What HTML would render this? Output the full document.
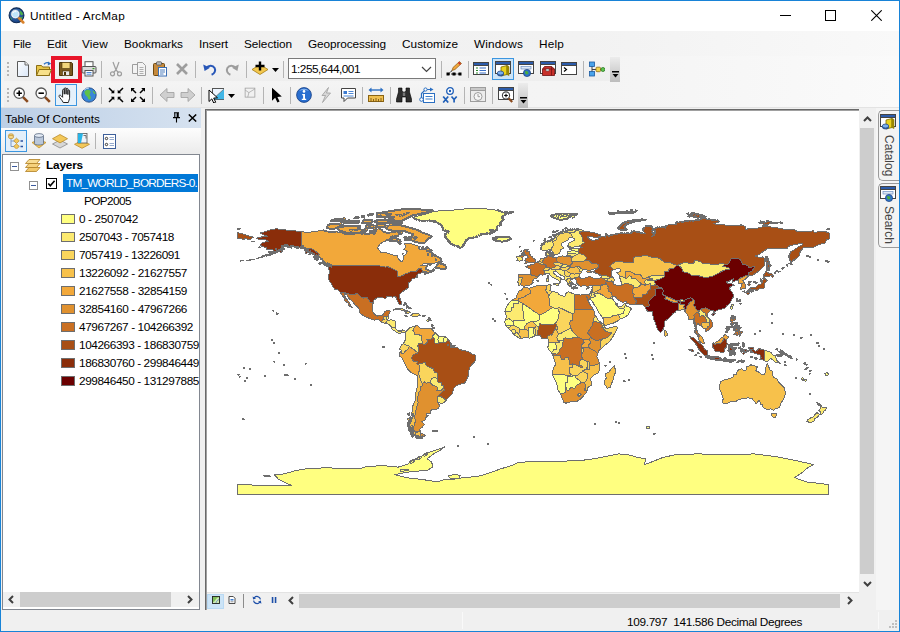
<!DOCTYPE html>
<html><head><meta charset="utf-8"><title>Untitled - ArcMap</title>
<style>
*{box-sizing:border-box;margin:0;padding:0}
html,body{width:900px;height:632px;overflow:hidden;background:#fff}
body{font-family:"Liberation Sans",sans-serif;font-size:12px;color:#000;position:relative}
.a{position:absolute}
.t{position:absolute;white-space:nowrap;line-height:14px;height:14px;transform-origin:0 50%;display:inline-block}
#win{position:absolute;left:0;top:0;width:900px;height:632px;background:#f0f0f0;overflow:hidden}
#frame{position:absolute;left:0;top:0;width:900px;height:632px;border:1px solid #1883d7;pointer-events:none}
.sep{position:absolute;width:1px;height:17px;background:#b4b4b4}
.grip{position:absolute;width:2px;height:16px;background:repeating-linear-gradient(180deg,#b5b5b5 0 2px,transparent 2px 4px)}
.opt{position:absolute;width:10px;background:linear-gradient(180deg,#ececec,#bdbdbd)}
.ic{position:absolute;width:16px;height:16px;overflow:visible}
.sw{position:absolute;left:61px;width:14px;height:10px;border:1px solid #6e6e6e}
.lg{position:absolute;left:79px}
</style></head><body>
<div id="win">
<!-- title bar -->
<div class="a" style="left:1px;top:1px;width:898px;height:30px;background:#fff"></div>
<span class="t" style="left:30px;top:9px;font-size:11.8px;letter-spacing:0.266px">Untitled - ArcMap</span>
<!-- menu bar -->
<div class="a" style="left:1px;top:31px;width:898px;height:25px;background:linear-gradient(90deg,#f0f0f0 0,#f2f2f2 65%,#f9f9f9 100%)"></div>
<!-- toolbar area -->
<div class="a" style="left:1px;top:56px;width:898px;height:52px;background:linear-gradient(90deg,#f3f3f3 0,#f4f4f4 65%,#fafafa 100%)"></div>
<div class="a" style="left:4px;top:57px;width:608px;height:24px;background:linear-gradient(180deg,#f4f4f4,#eeeeee)"></div>
<div class="a" style="left:4px;top:83px;width:516px;height:24px;background:linear-gradient(180deg,#f4f4f4,#eeeeee)"></div>
<div class="a" style="left:1px;top:107px;width:898px;height:1px;background:#e3e3e3"></div>
<span class="t" style="left:13px;top:37px;font-size:11.8px;letter-spacing:-0.254px">File</span><span class="t" style="left:47px;top:37px;font-size:11.8px;letter-spacing:-0.082px">Edit</span><span class="t" style="left:82px;top:37px;font-size:11.8px;letter-spacing:0.160px">View</span><span class="t" style="left:124px;top:37px;font-size:11.8px;letter-spacing:-0.002px">Bookmarks</span><span class="t" style="left:199px;top:37px;font-size:11.8px;letter-spacing:-0.086px">Insert</span><span class="t" style="left:244px;top:37px;font-size:11.8px;letter-spacing:-0.059px">Selection</span><span class="t" style="left:308px;top:37px;font-size:11.8px;letter-spacing:-0.105px">Geoprocessing</span><span class="t" style="left:402px;top:37px;font-size:11.8px;letter-spacing:0.030px">Customize</span><span class="t" style="left:474px;top:37px;font-size:11.8px;letter-spacing:0.163px">Windows</span><span class="t" style="left:539px;top:37px;font-size:11.8px;letter-spacing:0.184px">Help</span>
<div class="grip" style="left:7px;top:62px"></div><div class="a" style="left:51px;top:56px;width:31px;height:27px;border:4px solid #e8152a"></div><svg class="a" style="left:15px;top:61px" width="16" height="16" viewBox="0 0 16 16"><defs><linearGradient id="gnew" x1="0" y1="0" x2="1" y2="1"><stop offset="0" stop-color="#fff"/><stop offset="1" stop-color="#d9e6f8"/></linearGradient></defs><path d="M2.5 0.5h7.5l3.5 3.5v11.5h-11z" fill="url(#gnew)" stroke="#5a5a5a"/><path d="M10 0.5v3.5h3.5" fill="#e8e8e8" stroke="#6b6b6b"/></svg><svg class="a" style="left:36px;top:61px" width="16" height="16" viewBox="0 0 16 16"><path d="M0.5 4.5h5l1.2 1.5h6.8v8.5h-13z" fill="#e8c64a" stroke="#8a6d14"/><path d="M0.5 14.5l2.6-6h12.4l-2.6 6z" fill="#f7e08a" stroke="#8a6d14"/><path d="M8 3.2c2-2 4.5-2 5.7-.3" fill="none" stroke="#2b6fc2" stroke-width="1.4"/><path d="M12 0.6l3.2 2.2l-3.4 1.6z" fill="#2b6fc2"/></svg><svg class="a" style="left:58px;top:61px" width="16" height="16" viewBox="0 0 16 16"><path d="M1.5 1.5h12l1 1v12h-13z" fill="#7a5a1e" stroke="#4a3508"/><rect x="4" y="1.5" width="8" height="6" fill="#f1d57a" stroke="#4a3508" stroke-width=".6"/><rect x="4.5" y="10" width="7" height="4.5" fill="#e9e9e9" stroke="#4a3508" stroke-width=".6"/><rect x="6" y="11" width="2" height="3" fill="#4a3508"/></svg><svg class="a" style="left:81px;top:61px" width="16" height="16" viewBox="0 0 16 16"><rect x="4" y="0.7" width="8" height="5" fill="#fff" stroke="#555"/><rect x="1" y="5.5" width="14" height="6.5" rx="1" fill="#d9d9d9" stroke="#555"/><rect x="4" y="9.5" width="8" height="5.5" fill="#fff" stroke="#555"/><rect x="11.5" y="7" width="2" height="1.2" fill="#3a9a2a"/><path d="M5.5 11.5h5M5.5 13.2h5" stroke="#3b7bd1" stroke-width=".9"/></svg><div class="sep" style="left:101px;top:61px"></div><svg class="a" style="left:108px;top:61px" width="16" height="16" viewBox="0 0 16 16"><path d="M5 1l3 8M11 1l-3 8M8 9l-2.5 2.5M8 9l2.5 2.5" stroke="#9d9d9d" stroke-width="1.2" fill="none"/><circle cx="4.5" cy="12.8" r="2" fill="none" stroke="#9d9d9d" stroke-width="1.2"/><circle cx="11.5" cy="12.8" r="2" fill="none" stroke="#9d9d9d" stroke-width="1.2"/></svg><svg class="a" style="left:131px;top:61px" width="16" height="16" viewBox="0 0 16 16"><path d="M1.5 3.5h6l2 2v7h-8z" fill="#f3f3f3" stroke="#9d9d9d"/><path d="M6.5 1.5h5l3 3v10h-8z" fill="#f3f3f3" stroke="#9d9d9d"/><path d="M8.5 6.5h4M8.5 8.5h4M8.5 10.5h4M8.5 12.5h4" stroke="#9d9d9d" stroke-width=".8"/></svg><svg class="a" style="left:152px;top:61px" width="16" height="16" viewBox="0 0 16 16"><rect x="1.5" y="2.5" width="11" height="12" rx="1" fill="#c68a3c" stroke="#6f4a12"/><rect x="4.5" y="0.8" width="5" height="3.2" rx=".8" fill="#bdbdbd" stroke="#555" stroke-width=".8"/><rect x="6.5" y="6.5" width="8" height="8.5" fill="#fff" stroke="#3b6fb5"/><path d="M8 9h5M8 11h5M8 13h3.5" stroke="#3b6fb5" stroke-width=".9"/></svg><svg class="a" style="left:174px;top:61px" width="16" height="16" viewBox="0 0 16 16"><path d="M3 3l10 10M13 3L3 13" stroke="#9d9d9d" stroke-width="2.6" fill="none"/></svg><div class="sep" style="left:195px;top:61px"></div><svg class="a" style="left:202px;top:61px" width="16" height="16" viewBox="0 0 16 16"><path d="M4.2 7.2c2.4-3 6.6-3.2 8.4-.2c1.4 2.6 0 5.6-3 6.8" fill="none" stroke="#2857b8" stroke-width="2"/><path d="M1.2 3.6l1.4 6.4l5.4-3.2z" fill="#2857b8"/></svg><svg class="a" style="left:224px;top:61px" width="16" height="16" viewBox="0 0 16 16"><path d="M11.8 7.2c-2.4-3-6.6-3.2-8.4-.2c-1.4 2.6 0 5.6 3 6.8" fill="none" stroke="#9d9d9d" stroke-width="2"/><path d="M14.8 3.6l-1.4 6.4l-5.4-3.2z" fill="#9d9d9d"/></svg><div class="sep" style="left:246px;top:61px"></div><svg class="a" style="left:252px;top:61px" width="16" height="16" viewBox="0 0 16 16"><path d="M8 3.5l8 5l-8 5l-8-5z" fill="#f4c84e" stroke="#a67c12" stroke-width=".8"/><path d="M8 0.5v9M3.5 5h9" stroke="#000" stroke-width="2.4"/></svg><svg class="a" style="left:272px;top:68px" width="7" height="4"><path d="M0 0h7L3.5 4z" fill="#000"/></svg><div class="sep" style="left:283px;top:61px"></div><div class="a" style="left:288px;top:58px;width:148px;height:21px;background:#fff;border:1px solid #7a7a7a"></div><span class="t" style="left:291px;top:62px;font-size:11.8px;letter-spacing:-0.496px">1:255,644,001</span><svg class="a" style="left:421px;top:66px" width="11" height="7" viewBox="0 0 11 7"><path d="M1 1 L5.5 5.5 L10 1" fill="none" stroke="#444" stroke-width="1.2"/></svg><div class="sep" style="left:441px;top:61px"></div><svg class="a" style="left:446px;top:61px" width="16" height="16" viewBox="0 0 16 16"><path d="M2 13h12M2 13l6-5" stroke="#000" stroke-width="1" stroke-dasharray="2 1.2" fill="none"/><rect x="0.5" y="11.5" width="3" height="3" fill="#000"/><rect x="6.5" y="11.5" width="3" height="3" fill="#000"/><rect x="12.5" y="11.5" width="3" height="3" fill="#000"/><path d="M6 9.5l1-3l6.5-6l2 2l-6.5 6z" fill="#f0a63c" stroke="#8a5a14" stroke-width=".7"/><path d="M12.5 1.4l2 2" stroke="#c9302c" stroke-width="1.6"/></svg><div class="sep" style="left:468px;top:61px"></div><div class="a" style="left:492px;top:58px;width:22px;height:22px;background:#cce4f7;border:1px solid #3c96e0"></div><svg class="a" style="left:473px;top:61px" width="16" height="16" viewBox="0 0 16 16"><rect x="0.5" y="1.5" width="15" height="12" fill="#fff" stroke="#444"/><rect x="0.5" y="1.5" width="15" height="3" fill="#2c5cab" stroke="#444"/><path d="M3 7h2M3 9.5h2M3 12h2" stroke="#2a8a2a" stroke-width="1.2"/><path d="M6.5 7h6.5M6.5 9.5h6.5M6.5 12h6.5" stroke="#3b6fc4" stroke-width="1.2"/></svg><svg class="a" style="left:495px;top:61px" width="16" height="16" viewBox="0 0 16 16"><rect x="0.5" y="0.5" width="15" height="12" fill="#fff" stroke="#444"/><rect x="0.5" y="0.5" width="15" height="3" fill="#2c5cab" stroke="#444"/><path d="M6 6l6-1.5v9l-6 1.5z" fill="#e9d21c" stroke="#7a6a00" stroke-width=".8"/><path d="M12 4.5l2 1v9l-2-1z" fill="#a89500" stroke="#7a6a00" stroke-width=".6"/><ellipse cx="5.5" cy="13" rx="3.2" ry="2" fill="#3f78c9" stroke="#1d3f78" stroke-width=".7"/><ellipse cx="5.5" cy="12" rx="3.2" ry="2" fill="#7ab0ee" stroke="#1d3f78" stroke-width=".7"/></svg><svg class="a" style="left:518px;top:61px" width="16" height="16" viewBox="0 0 16 16"><rect x="0.5" y="0.5" width="15" height="12" fill="#fff" stroke="#444"/><rect x="0.5" y="0.5" width="15" height="3" fill="#2c5cab" stroke="#444"/><rect x="3" y="5.5" width="10" height="2.5" fill="#dfe8f5" stroke="#6d8fc2" stroke-width=".7"/><circle cx="9" cy="12" r="3.6" fill="#2f72c8" stroke="#173e7c" stroke-width=".7"/><path d="M7 10.5c1.5-1 3 0 3.5 1.5c-.5 1.5-2 1.8-3 1z" fill="#4cae3c"/></svg><svg class="a" style="left:540px;top:61px" width="16" height="16" viewBox="0 0 16 16"><rect x="0.5" y="0.5" width="15" height="12" fill="#fff" stroke="#444"/><rect x="0.5" y="0.5" width="15" height="3" fill="#2c5cab" stroke="#444"/><path d="M2.5 8l2-2.5h7l3 2.5v6.5h-12z" fill="#c8302a" stroke="#6e1010" stroke-width=".8"/><path d="M2.5 8h12M11.5 5.5v9" stroke="#6e1010" stroke-width=".7"/><rect x="6" y="8" width="3" height="2" fill="#e6e6e6" stroke="#555" stroke-width=".5"/></svg><svg class="a" style="left:561px;top:61px" width="16" height="16" viewBox="0 0 16 16"><rect x="0.5" y="1.5" width="15" height="12" fill="#fff" stroke="#444"/><rect x="0.5" y="1.5" width="15" height="3" fill="#2c5cab" stroke="#444"/><path d="M3 6.5l2.5 2L3 10.5" fill="none" stroke="#000" stroke-width="1.2"/></svg><div class="sep" style="left:583px;top:61px"></div><svg class="a" style="left:589px;top:61px" width="16" height="16" viewBox="0 0 16 16"><path d="M3 4v9M3 8.5h10" stroke="#444" stroke-width="1" fill="none"/><rect x="0.5" y="1" width="5" height="4.5" fill="#4aa3ea" stroke="#1c5aa0" stroke-width=".8"/><rect x="0.5" y="10.5" width="5" height="4.5" fill="#4aa3ea" stroke="#1c5aa0" stroke-width=".8"/><rect x="7" y="6.2" width="4.5" height="4.5" rx="1" fill="#f3d34a" stroke="#8a6d14" stroke-width=".8"/><rect x="12" y="6.5" width="3.8" height="4" rx="1.8" fill="#5ec44e" stroke="#2a7a22" stroke-width=".8"/></svg><div class="opt" style="left:610px;top:57px;height:25px"></div><svg class="a" style="left:612px;top:71px" width="7" height="7"><rect x="0" y="0" width="7" height="1.5" fill="#000"/><path d="M0.5 3h6L3.5 6.5z" fill="#000"/></svg><div class="grip" style="left:7px;top:88px"></div><div class="a" style="left:55px;top:84px;width:22px;height:22px;background:#e5f1fb;border:1px solid #3c96e0"></div><svg class="a" style="left:13px;top:87px" width="16" height="16" viewBox="0 0 16 16"><path d="M9.8 9.8l5 5" stroke="#8a4a1e" stroke-width="2.6"/><circle cx="6.2" cy="6.2" r="5.2" fill="#fff" stroke="#555" stroke-width="1.3"/><path d="M3.5 6.2h5.4M6.2 3.5v5.4" stroke="#000" stroke-width="1.6"/></svg><svg class="a" style="left:35px;top:87px" width="16" height="16" viewBox="0 0 16 16"><path d="M9.8 9.8l5 5" stroke="#8a4a1e" stroke-width="2.6"/><circle cx="6.2" cy="6.2" r="5.2" fill="#fff" stroke="#555" stroke-width="1.3"/><path d="M3.5 6.2h5.4" stroke="#000" stroke-width="1.6"/></svg><svg class="a" style="left:58px;top:87px" width="16" height="16" viewBox="0 0 16 16"><path d="M5.2 15.5c-.8-2.2-3.6-4.6-4.2-6.2c-.3-1.2 1.2-1.6 2.2-.5l1.4 1.5V3.2c0-1.3 1.7-1.3 1.7 0v4V1.8c0-1.3 1.8-1.3 1.8 0v5.4V2.2c0-1.3 1.8-1.3 1.8 0v5.4V3.8c0-1.2 1.7-1.2 1.7 0v6.4c0 2.4-.9 3.4-1.3 5.3z" fill="#fff" stroke="#222" stroke-width="1" stroke-linejoin="round"/></svg><svg class="a" style="left:81px;top:87px" width="16" height="16" viewBox="0 0 16 16"><circle cx="8" cy="8" r="7.2" fill="#3a86d8" stroke="#1a3f7a" stroke-width=".8"/><path d="M3.5 4.5c2-2.2 4.5-2 6 -.5c.6 1.6-1 2.6-.8 4.2c1.2 1.2 1.8 2.5.5 4.3c-1.6.6-2.4-1.2-2.8-2.8c-1.6-.6-3-2.6-2.9-5.2z" fill="#5fc04a"/><path d="M11.5 3.5c1.4.4 2.6 1.7 3 3.2c-1.2.6-2.4-.2-3-3.2z" fill="#5fc04a"/><path d="M3 3.2a7 7 0 0 1 5-2.2" stroke="#cfe6ff" stroke-width="1" fill="none"/></svg><div class="sep" style="left:101px;top:87px"></div><svg class="a" style="left:108px;top:87px" width="16" height="16" viewBox="0 0 16 16"><path d="M1 1l4.5 4.5M15 1l-4.5 4.5M1 15l4.5-4.5M15 15l-4.5-4.5" stroke="#000" stroke-width="1.5" fill="none"/><path d="M6.3 2.8v3.5h-3.5zM9.7 2.8v3.5h3.5zM6.3 13.2v-3.5h-3.5zM9.7 13.2v-3.5h3.5z" fill="#000"/></svg><svg class="a" style="left:130px;top:87px" width="16" height="16" viewBox="0 0 16 16"><path d="M2 2l4 4M14 2l-4 4M2 14l4-4M14 14l-4-4" stroke="#000" stroke-width="1.5" fill="none"/><path d="M1 4.8v-3.8h3.8zM15 4.8v-3.8h-3.8zM1 11.2v3.8h3.8zM15 11.2v3.8h-3.8z" fill="#000"/></svg><div class="sep" style="left:152px;top:87px"></div><svg class="a" style="left:159px;top:87px" width="16" height="16" viewBox="0 0 16 16"><path d="M1 8l7-6.5v4h7v5h-7v4z" fill="#cfcfcf" stroke="#9d9d9d" stroke-width=".8"/></svg><svg class="a" style="left:180px;top:87px" width="16" height="16" viewBox="0 0 16 16"><path d="M15 8l-7-6.5v4h-7v5h7v4z" fill="#cfcfcf" stroke="#9d9d9d" stroke-width=".8"/></svg><div class="sep" style="left:201px;top:87px"></div><svg class="a" style="left:208px;top:87px" width="16" height="16" viewBox="0 0 16 16"><rect x="4.5" y="1.5" width="12" height="11" fill="#eef6ff" stroke="#555"/><path d="M4.5 12.5l12-11v11z" fill="#41b6e6" stroke="#555" stroke-width=".6"/><path d="M1 3l0 11.5l2.8-2.6l2 4.2l1.9-.9l-2-4.1l3.8-.3z" fill="#fff" stroke="#000" stroke-width="1"/></svg><svg class="a" style="left:228px;top:94px" width="7" height="4"><path d="M0 0h7L3.5 4z" fill="#000"/></svg><svg class="a" style="left:244px;top:87px" width="12" height="12" viewBox="0 0 16 16"><rect x="1.5" y="1.5" width="13" height="12" fill="#f1f1f1" stroke="#9d9d9d"/><path d="M1.5 4l5 3.5l-1.5 6M6.5 7.5l8-5" fill="none" stroke="#9d9d9d" stroke-width=".9"/></svg><div class="sep" style="left:263px;top:87px"></div><svg class="a" style="left:269px;top:87px" width="16" height="16" viewBox="0 0 16 16"><path d="M3 0.8v13l3.2-3l2.2 4.6l2.2-1l-2.2-4.5l4.4-.4z" fill="#000"/></svg><div class="sep" style="left:290px;top:87px"></div><svg class="a" style="left:296px;top:87px" width="16" height="16" viewBox="0 0 16 16"><circle cx="8" cy="8" r="7.4" fill="#2a6fd0" stroke="#143c82" stroke-width=".8"/><path d="M3 4a6.5 6.5 0 0 1 10 0a9 6 0 0 0-10 0z" fill="#9cc4f5" opacity=".8"/><circle cx="8" cy="4.4" r="1.3" fill="#fff"/><path d="M6.2 7h2.8v4.8h1.2v1.2h-4.4v-1.2h1.3v-3.6h-.9z" fill="#fff"/></svg><svg class="a" style="left:318px;top:87px" width="16" height="16" viewBox="0 0 16 16"><path d="M10.5 0.5l-6.5 8h3.5l-3 7l8-9.5h-4z" fill="#d8d8d8" stroke="#9d9d9d" stroke-width=".8"/></svg><svg class="a" style="left:340px;top:87px" width="16" height="16" viewBox="0 0 16 16"><path d="M1.5 1.5h14v9.5h-8l-3.5 3.5v-3.5h-2.5z" fill="#fff" stroke="#444"/><rect x="3.5" y="4" width="3.5" height="3" fill="#3b7bd1"/><path d="M8.5 4.5h5M8.5 6.5h5M3.5 9h10" stroke="#3b7bd1" stroke-width=".9"/></svg><div class="sep" style="left:362px;top:87px"></div><svg class="a" style="left:368px;top:87px" width="16" height="16" viewBox="0 0 16 16"><path d="M2 3h12" stroke="#2b6fc2" stroke-width="1.4"/><path d="M0.5 3l3-2.4v4.8zM15.5 3l-3-2.4v4.8z" fill="#2b6fc2"/><rect x="0.5" y="8.5" width="15" height="6" fill="#f0c050" stroke="#8a6414"/><path d="M3 11v3.5M5.5 12v2.5M8 11v3.5M10.5 12v2.5M13 11v3.5" stroke="#6b4a0c" stroke-width=".8"/></svg><div class="sep" style="left:390px;top:87px"></div><svg class="a" style="left:396px;top:87px" width="16" height="16" viewBox="0 0 16 16"><path d="M2.5 1h3.5v3l1 1h2l1-1v-3h3.5v4l2 7v3h-5.5v-5h-4v5h-5.5v-3l2-7z" fill="#2e2e2e" stroke="#000" stroke-width=".6"/><rect x="6.8" y="5.5" width="2.4" height="3.5" fill="#777"/></svg><svg class="a" style="left:419px;top:87px" width="16" height="16" viewBox="0 0 16 16"><rect x="4.5" y="6.5" width="11" height="9" fill="#fff" stroke="#2b6fc2"/><path d="M6.5 9.5h7M6.5 12h7" stroke="#2b6fc2" stroke-width=".9"/><path d="M2.5 12V6.5l4-4h5.5" fill="none" stroke="#2b6fc2" stroke-width="1.2"/><circle cx="2.5" cy="12.5" r="1.8" fill="#fff" stroke="#2b6fc2"/><circle cx="6.5" cy="2.5" r="1.6" fill="#fff" stroke="#2b6fc2"/><path d="M11 0.5l3.5 2l-3.5 2z" fill="#2b6fc2"/></svg><svg class="a" style="left:442px;top:87px" width="16" height="16" viewBox="0 0 16 16"><circle cx="8" cy="4" r="3.3" fill="#fff" stroke="#1f5fb8" stroke-width="1.3"/><circle cx="8" cy="4" r="1.2" fill="#1f5fb8"/><path d="M1.2 9.5l5 6M6.2 9.5l-5 6" stroke="#1f5fb8" stroke-width="1.7"/><path d="M9.5 9.5l2.6 3l2.6-3M12.1 12.5v3" stroke="#1f5fb8" stroke-width="1.7" fill="none"/></svg><div class="sep" style="left:464px;top:87px"></div><svg class="a" style="left:470px;top:87px" width="16" height="16" viewBox="0 0 16 16"><rect x="0.5" y="0.5" width="15" height="14" fill="#ececec" stroke="#9d9d9d"/><rect x="0.5" y="0.5" width="15" height="3" fill="#c8c8c8" stroke="#9d9d9d"/><circle cx="8" cy="9.5" r="4" fill="#f6f6f6" stroke="#9d9d9d"/><path d="M8 7v2.7h2" stroke="#9d9d9d" fill="none"/></svg><div class="sep" style="left:492px;top:87px"></div><svg class="a" style="left:498px;top:87px" width="16" height="16" viewBox="0 0 16 16"><rect x="0.5" y="0.5" width="15" height="12" fill="#fff" stroke="#444"/><rect x="0.5" y="0.5" width="15" height="3" fill="#2c5cab" stroke="#444"/><circle cx="8" cy="8.5" r="3.6" fill="#fff" stroke="#444" stroke-width="1.1"/><path d="M6.2 8.5h3.6M8 6.7v3.6" stroke="#000" stroke-width="1.1"/><path d="M10.6 11.2l3.6 3.8" stroke="#8a4a1e" stroke-width="2.2"/></svg><div class="opt" style="left:518px;top:83px;height:25px"></div><svg class="a" style="left:520px;top:97px" width="7" height="7"><rect x="0" y="0" width="7" height="1.5" fill="#000"/><path d="M0.5 3h6L3.5 6.5z" fill="#000"/></svg>
<!-- TOC -->
<div class="a" style="left:1px;top:108px;width:200px;height:20px;background:linear-gradient(90deg,#bccfe6 0,#d6e2f0 100%)"></div>
<span class="t" style="left:5px;top:112px;font-size:11.8px;letter-spacing:0.033px">Table Of Contents</span>
<div class="a" style="left:1px;top:128px;width:200px;height:26px;background:linear-gradient(180deg,#fdfdfd,#ebebeb)"></div>
<div class="a" style="left:2px;top:154px;width:198px;height:456px;background:#fff;border:1px solid #828790"></div>
<svg class="a" style="left:172px;top:112px" width="9" height="11" viewBox="0 0 9 11"><path d="M2 0.8h5M2.8 0.8v4.7M6.2 0.8v4.7M5.2 0.8v4.7M1 5.6h7M4.5 5.6v5" fill="none" stroke="#000" stroke-width="1.1"/></svg><svg class="a" style="left:188px;top:114px" width="9" height="8" viewBox="0 0 9 8"><path d="M0.8 0.5L8.2 7.5M8.2 0.5L0.8 7.5" fill="none" stroke="#000" stroke-width="1.5"/></svg><div class="a" style="left:5px;top:130px;width:22px;height:22px;background:#e3effa;border:1px solid #3c96e0"></div><svg class="a" style="left:7px;top:133px" width="16" height="16" viewBox="0 0 16 16"><path d="M4 4.5v9h3.5M4 8h3.5" fill="none" stroke="#7a9ac8" stroke-width="1"/><ellipse cx="4" cy="2.5" rx="2.6" ry="1.7" fill="#f6d98a" stroke="#b98a2a" stroke-width=".7"/><ellipse cx="4" cy="4" rx="2.6" ry="1.7" fill="#f6d98a" stroke="#b98a2a" stroke-width=".7"/><path d="M9.5 5.2l2.8 2.6l-2.8 2.6l-2.8-2.6z" fill="#f3c85a" stroke="#b98a2a" stroke-width=".7"/><path d="M9.5 10.8l2.8 2.6l-2.8 2.6l-2.8-2.6z" fill="#f3c85a" stroke="#b98a2a" stroke-width=".7"/><path d="M13.5 8h2.5M13.5 13.5h2.5" stroke="#2b50a0" stroke-width="1.5"/></svg><svg class="a" style="left:31px;top:133px" width="16" height="16" viewBox="0 0 16 16"><path d="M1 9.5l7 5.5l7-5.5l-7-3z" fill="#f3c85a" stroke="#b98a2a" stroke-width=".7"/><path d="M3.5 2.5v8c0 2 9 2 9 0v-8" fill="#b9c7da" stroke="#5a6a82" stroke-width=".8"/><ellipse cx="8" cy="2.5" rx="4.5" ry="1.9" fill="#e4ebf5" stroke="#5a6a82" stroke-width=".8"/></svg><svg class="a" style="left:52px;top:133px" width="16" height="16" viewBox="0 0 16 16"><path d="M8 7l7.5 4l-7.5 4l-7.5-4z" fill="#d7d7d7" stroke="#8a8a8a" stroke-width=".8"/><path d="M8 1.5l7.5 4.2l-7.5 4.2l-7.5-4.2z" fill="#f3c85a" stroke="#b98a2a" stroke-width=".8"/></svg><svg class="a" style="left:74px;top:133px" width="16" height="16" viewBox="0 0 16 16"><path d="M8 7.5l7.5 3.8l-7.5 4l-7.5-4z" fill="#f3c85a" stroke="#b98a2a" stroke-width=".8"/><rect x="4" y="0.5" width="9" height="9.5" fill="#eef3f8" stroke="#555" stroke-width=".8"/><path d="M4 0.5h5l-2 9.5h-3z" fill="#27b5e8"/><path d="M9.5 2.5h2.5v3" fill="none" stroke="#555" stroke-width=".8"/></svg><div class="sep" style="left:95px;top:133px;height:16px"></div><svg class="a" style="left:103px;top:134px" width="16" height="16" viewBox="0 0 16 16"><rect x="0.5" y="0.5" width="12" height="14" fill="#fff" stroke="#3d5f9a"/><circle cx="3.5" cy="4.5" r="1.2" fill="none" stroke="#222" stroke-width=".9"/><circle cx="3.5" cy="10.5" r="1.2" fill="none" stroke="#222" stroke-width=".9"/><path d="M6.5 3.5h4.5M6.5 5.5h4.5M6.5 9.5h4.5M6.5 11.5h4.5" stroke="#8aa2c8" stroke-width=".9"/></svg><div class="a" style="left:0;top:155px;width:199px;height:436px;overflow:hidden"><div class="a" style="left:0;top:-155px;width:300px;height:632px"><svg class="a" style="left:10px;top:162px" width="9" height="9"><rect x="0.5" y="0.5" width="8" height="8" fill="#fff" stroke="#919191"/><rect x="2" y="4" width="5" height="1" fill="#3b5a9e"/></svg><svg class="a" style="left:25px;top:157px" width="16" height="16" viewBox="0 0 16 16"><path d="M4 10.5h11l-3.5 4h-11z" fill="#f3c96a" stroke="#b07f22" stroke-width=".8"/><path d="M4 6.5h11l-3.5 4h-11z" fill="#f6d27c" stroke="#b07f22" stroke-width=".8"/><path d="M4 2.5h11l-3.5 4h-11z" fill="#f8dc92" stroke="#b07f22" stroke-width=".8"/></svg><span class="t" style="left:46px;top:158px;font-size:11.8px;letter-spacing:-0.174px"><b>Layers</b></span><svg class="a" style="left:29px;top:181px" width="9" height="9"><rect x="0.5" y="0.5" width="8" height="8" fill="#fff" stroke="#919191"/><rect x="2" y="4" width="5" height="1" fill="#3b5a9e"/></svg><svg class="a" style="left:46px;top:178px" width="11" height="11"><rect x="0.5" y="0.5" width="10" height="10" fill="#fff" stroke="#000"/><path d="M2.3 5.4l2 2.3l4.3-4.9" fill="none" stroke="#000" stroke-width="1.6"/></svg><div class="a" style="left:63px;top:174px;width:135px;height:18px;background:#0078d7"></div><span class="t" style="left:66px;top:176px;font-size:11.8px;color:#fff;letter-spacing:-0.799px">TM_WORLD_BORDERS-0.</span><span class="t" style="left:84px;top:194px;font-size:11.8px;letter-spacing:-0.596px">POP2005</span><div class="sw" style="top:214px;background:#ffff80"></div><span class="t" style="left:79px;top:212px;font-size:11.8px;letter-spacing:-0.362px">0 - 2507042</span><div class="sw" style="top:232px;background:#fcea70"></div><span class="t" style="left:79px;top:230px;font-size:11.8px;letter-spacing:-0.432px">2507043 - 7057418</span><div class="sw" style="top:250px;background:#fad55c"></div><span class="t" style="left:79px;top:248px;font-size:11.8px;letter-spacing:-0.439px">7057419 - 13226091</span><div class="sw" style="top:268px;background:#f7c14b"></div><span class="t" style="left:79px;top:266px;font-size:11.8px;letter-spacing:-0.393px">13226092 - 21627557</span><div class="sw" style="top:286px;background:#f2a83a"></div><span class="t" style="left:79px;top:284px;font-size:11.8px;letter-spacing:-0.393px">21627558 - 32854159</span><div class="sw" style="top:304px;background:#e0912f"></div><span class="t" style="left:79px;top:302px;font-size:11.8px;letter-spacing:-0.393px">32854160 - 47967266</span><div class="sw" style="top:322px;background:#c96f22"></div><span class="t" style="left:79px;top:320px;font-size:11.8px;letter-spacing:-0.402px">47967267 - 104266392</span><div class="sw" style="top:340px;background:#a84f15"></div><span class="t" style="left:79px;top:338px;font-size:11.8px;letter-spacing:-0.409px">104266393 - 186830759</span><div class="sw" style="top:358px;background:#8a2d0a"></div><span class="t" style="left:79px;top:356px;font-size:11.8px;letter-spacing:-0.409px">186830760 - 299846449</span><div class="sw" style="top:376px;background:#6b0000"></div><span class="t" style="left:79px;top:374px;font-size:11.8px;letter-spacing:-0.409px">299846450 - 131297885</span></div></div>
<!-- TOC hscroll -->
<div class="a" style="left:3px;top:592px;width:196px;height:15px;background:#f0f0f0"></div>
<div class="a" style="left:20px;top:592px;width:151px;height:15px;background:#cdcdcd"></div>
<svg class="a" style="left:7px;top:594px" width="8" height="11" viewBox="0 0 8 11"><path d="M6 2 L2.5 5.5 L6 9" fill="none" stroke="#404040" stroke-width="2"/></svg>
<svg class="a" style="left:186px;top:594px" width="8" height="11" viewBox="0 0 8 11"><path d="M2 2 L5.5 5.5 L2 9" fill="none" stroke="#404040" stroke-width="2"/></svg>
<!-- splitter/map frame -->
<div class="a" style="left:205px;top:109px;width:671px;height:501px;background:#f0f0f0"></div>
<div class="a" style="left:205px;top:109px;width:654px;height:501px;background:#696969"></div>
<div class="a" style="left:206px;top:110px;width:653px;height:500px;background:#a0a0a0"></div>
<div class="a" id="map" style="left:207px;top:111px;width:652px;height:481px;background:#fff;overflow:hidden">
<svg class="a" style="left:0;top:0" width="652" height="481" viewBox="207 111 652 481" shape-rendering="crispEdges"><g stroke="#6e6e6e" stroke-linejoin="round"><path stroke-width="2" fill="#ffff80" d="M492.7,238.3L496.8,236.8L503.4,237.0L509.2,237.0L510.8,239.1L508.3,240.3L502.6,241.7L496.0,240.9L493.5,239.4L496.8,238.6ZM551.1,215.3L556.0,214.4L565.9,214.0L577.4,214.3L569.2,216.9L567.5,218.6L561.0,220.0L556.0,218.6L551.1,216.6Z"/><path stroke-width="2" fill="#fcea70" d="M546.3,255.6L546.5,252.3L550.3,251.1L550.8,253.4L549.4,255.1L548.6,255.7ZM777.2,355.2L780.5,355.0L783.0,352.9L783.4,354.1L781.3,355.9L778.0,356.2ZM781.0,350.4L784.3,352.6L784.6,353.7L783.0,351.8Z"/><path stroke-width="2" fill="#fad55c" d="M571.6,287.5L576.2,288.0L573.3,288.6Z"/><path stroke-width="2" fill="#f2a83a" d="M322.0,262.5L326.6,263.3L329.9,266.2L327.4,265.9L323.3,263.8ZM314.3,257.0L316.4,257.2L317.2,260.0L315.1,258.8ZM435.5,267.6L437.6,264.6L439.6,261.8L441.7,261.1L441.2,263.8L445.0,264.9L446.2,267.9L444.2,269.2L440.9,268.7ZM431.9,236.6L427.8,239.1L425.3,242.4L420.4,243.2L414.6,241.6L410.5,239.9L404.7,239.9L408.0,238.3L412.1,237.5L413.0,234.2L404.7,231.2L401.4,231.4L393.2,230.9L386.6,229.2L385.8,226.0L393.2,224.8L399.8,225.1L404.7,226.3L411.3,228.1L417.9,230.1L422.0,232.5L429.4,235.0ZM340.6,230.9L348.8,233.4L360.3,232.5L366.1,231.4L360.3,229.2L360.3,226.0L352.1,226.0L345.5,226.4L339.0,226.8L337.3,228.4ZM326.6,227.6L330.7,229.1L336.5,228.3L339.8,226.0L343.1,225.3L339.8,223.8L334.0,223.5L328.3,224.8ZM385.0,220.2L401.4,220.7L404.7,219.4L409.7,216.9L413.0,215.3L421.2,213.6L431.0,211.2L432.7,210.3L417.9,209.3L401.4,209.5L389.9,211.2L381.7,212.5L385.0,213.6L391.6,214.0L388.3,216.9L393.2,217.7L388.3,219.4ZM381.7,223.2L401.4,223.5L402.3,221.8L393.2,221.5L386.6,220.4L376.8,219.9L374.3,221.8ZM376.0,227.6L384.2,226.8L385.0,224.5L376.8,224.3ZM365.3,228.4L373.5,228.1L373.5,225.1L366.9,224.6ZM340.6,222.3L352.1,223.5L358.7,222.7L358.7,221.0L352.1,220.5L342.2,220.5ZM362.0,222.7L371.8,222.7L371.8,220.2L363.6,220.2ZM376.8,217.2L389.9,217.2L389.9,213.6L376.8,212.8ZM389.9,241.2L400.6,241.6L399.8,239.9L394.0,237.5L391.6,239.1ZM370.2,232.5L376.0,233.2L375.1,231.2L370.2,230.9ZM330.7,221.0L340.6,221.4L342.2,219.4L335.7,218.6Z"/><path stroke-width="2" fill="#c96f22" d="M737.7,325.4L739.4,326.3L738.9,329.2L737.7,328.2ZM733.6,326.6L735.6,327.1L735.8,330.9L734.4,330.4L733.6,328.7ZM725.7,332.2L729.5,327.4L729.2,329.1L726.6,332.2ZM731.2,324.0L732.8,324.3L732.3,325.8Z"/><path stroke-width="2" fill="#a84f15" d="M617.7,228.4L620.2,229.6L626.7,229.7L624.3,226.8L626.7,224.3L633.3,221.8L645.6,219.7L641.5,219.4L628.4,221.0L623.4,223.0L620.2,225.5ZM689.2,215.3L692.5,212.8L702.4,215.3L705.7,216.9L697.4,217.7ZM610.3,214.1L618.5,213.1L628.4,213.5L635.0,212.3L625.1,211.8L611.9,213.1ZM766.5,256.7L768.2,259.7L769.0,263.8L770.6,265.4L768.2,268.7L769.0,270.4L766.5,270.4L766.5,267.1L766.5,262.1L766.0,258.0Z"/><path stroke-width="2" fill="#8a2d0a" d="M706.2,357.2L708.6,355.9L711.4,357.0L715.2,356.5L718.3,357.3L721.3,358.7L721.1,360.3L715.5,359.6L710.6,358.8ZM728.7,346.8L730.3,344.7L732.0,343.9L735.3,344.5L738.6,343.4L737.7,345.3L735.3,345.5L732.8,345.3L730.7,347.5L732.8,347.5L735.8,347.5L733.6,349.0L732.8,349.3L734.1,351.6L735.3,352.9L734.4,354.9L733.1,353.7L732.0,351.8L731.6,350.6L730.8,350.9L731.0,355.2L729.5,355.0L729.5,351.8L728.4,350.4L729.2,348.1L730.0,346.2ZM722.1,359.5L725.4,359.6L728.7,359.6L732.0,359.8L735.3,359.6L734.9,360.5L730.3,360.6L726.2,360.8L722.4,360.5ZM742.7,342.7L744.3,344.4L743.5,347.2L742.7,345.2ZM743.5,350.9L747.9,351.3L746.0,351.8Z"/><path stroke-width="1" fill="#ffff80" d="M386.3,316.6L388.0,315.7L388.0,318.9L386.8,319.9L386.3,319.7ZM403.9,302.1L406.0,302.4L405.1,304.6ZM407.7,306.0L408.8,306.5L409.2,307.7ZM431.4,328.2L432.9,328.2L432.7,329.4L431.4,329.4ZM413.0,217.4L424.5,214.4L434.3,211.2L450.8,210.3L467.2,208.7L483.7,208.5L496.8,210.3L503.4,212.0L513.3,212.0L505.0,214.4L501.8,216.9L503.4,219.4L500.1,222.7L501.8,224.3L496.8,226.8L496.8,230.1L490.2,230.4L495.2,231.2L490.2,233.4L482.0,234.0L477.1,236.6L470.5,238.0L467.2,239.1L465.6,241.6L462.3,247.0L459.8,247.5L457.4,246.2L453.2,245.2L450.8,243.2L448.3,240.8L445.8,237.5L444.2,235.0L449.1,231.7L443.4,230.1L442.6,227.6L440.1,224.3L436.8,221.8L429.4,220.7L421.2,221.0L416.2,219.4ZM434.3,332.0L436.8,334.5L438.9,336.1L438.8,338.1L437.6,339.4L439.3,342.7L436.3,343.9L434.3,342.7L434.7,338.6L433.2,337.4L432.2,336.1L434.3,334.5ZM438.9,336.1L444.2,336.3L443.9,338.6L443.4,342.4L440.9,342.9L439.3,342.7L437.6,339.4L438.8,338.1ZM444.2,336.3L447.5,338.1L448.1,339.1L446.7,341.9L443.4,342.4L443.9,338.6ZM432.7,430.7L437.6,430.4L437.6,431.5L432.7,431.8ZM586.1,288.3L589.7,287.5L588.7,288.6L586.4,289.1ZM567.5,253.7L567.5,251.3L573.0,250.8L578.2,251.4L579.0,253.7L576.6,254.4L574.1,253.4ZM571.6,249.8L573.0,250.8L578.2,251.4L579.0,248.2L574.9,248.0L571.6,248.6ZM590.4,297.7L592.2,298.0L594.7,296.7L595.5,295.8L593.8,294.2L597.1,292.9L599.4,293.5L602.1,294.7L606.5,298.0L609.5,298.1L611.1,298.5L612.8,299.3L615.2,302.1L615.6,304.1L616.9,305.5L617.9,306.2L619.3,308.3L623.8,308.7L624.4,309.8L623.4,313.1L618.5,314.8L613.6,315.4L609.5,317.7L604.0,317.4L603.2,319.0L602.1,317.2L600.4,314.8L597.5,310.6L596.3,307.4L594.2,304.9L593.0,302.4L590.9,300.0ZM620.3,318.7L618.5,314.8L623.4,313.1L624.4,309.8L623.8,308.7L625.1,306.2L625.7,305.1L626.7,306.5L629.5,307.2L631.3,309.0L629.2,312.5L628.0,314.8L625.9,316.4L623.4,318.0ZM616.5,305.4L617.9,304.9L617.7,303.1L616.9,303.2ZM732.0,304.6L733.6,304.9L731.6,309.8L730.3,307.8ZM679.0,301.1L679.4,301.9L684.3,301.8L684.3,300.3L681.0,299.6ZM738.6,360.8L741.8,359.8L741.0,360.8L738.6,362.4ZM504.9,311.5L511.6,311.0L511.6,307.4L513.3,307.4L513.3,303.2L518.7,303.2L518.7,300.4L511.3,300.4L509.2,302.9L506.7,306.5ZM512.9,321.7L514.1,325.8L515.4,326.3L519.0,327.9L519.8,329.2L523.1,329.1L524.3,329.1L524.3,326.6L525.9,325.1L526.4,324.0L528.9,322.6L532.2,321.3L534.6,321.3L538.8,320.7L539.9,318.4L539.9,314.4L538.4,314.8L537.9,313.4L535.0,312.0L525.1,304.9L522.3,304.9L524.0,318.9L524.0,320.5L514.1,320.3ZM533.3,321.3L534.6,323.8L536.6,325.6L538.9,326.8L539.6,323.8L544.5,324.6L547.8,325.0L552.7,324.3L555.4,323.5L558.5,318.4L559.3,312.3L557.7,308.2L556.4,308.8L552.7,307.4L542.9,313.9L539.9,314.4L539.9,318.4L538.8,320.7L534.6,321.3ZM504.2,321.8L505.9,319.5L509.2,318.7L512.9,321.7L514.1,325.4L510.5,325.3L505.5,325.6L505.4,323.8ZM505.5,325.6L510.5,325.3L510.3,326.8L508.3,327.9ZM528.4,327.9L528.4,330.4L528.6,333.7L527.9,337.6L529.7,338.1L535.0,336.0L533.8,333.7L533.8,329.6L533.0,327.9ZM549.1,342.2L548.3,344.2L548.6,346.0L547.5,347.2L548.8,349.9L551.3,352.6L552.4,351.9L553.6,349.8L556.7,349.1L556.7,346.8L555.7,343.7L554.4,342.4ZM552.4,374.4L556.0,374.6L563.4,374.6L568.2,375.6L571.5,374.9L574.6,375.3L571.6,376.4L567.5,376.1L567.5,382.2L565.9,382.2L565.9,386.8L565.9,392.9L561.6,393.2L560.1,393.0L557.7,389.6L556.8,383.5L555.0,380.2ZM565.9,382.2L567.5,382.2L567.5,376.1L571.6,376.4L574.6,375.3L575.8,378.1L578.6,379.7L581.3,382.5L577.4,384.8L575.4,386.6L574.9,388.3L570.8,387.6L568.7,390.1L567.0,390.2L565.9,386.8ZM601.7,327.9L602.7,325.4L603.9,325.1L604.4,327.1L603.7,327.1ZM237.5,494.3L237.5,484.4L260.6,485.4L292,485.7L283,481.5L278,478.8L274,474.2L280,474.6L286,473.3L296,470.5L306,468.9L324,467.8L346,468.4L359,468.9L368,466.2L385,465.8L398.3,467.1L407.2,464.4L411.7,461.1L420.6,456.7L429.4,452.2L439.4,448.9L445,446.7L440,450.5L432.8,454.4L427.2,458.9L431.7,462.2L432.8,466.7L428.3,470L418.3,471.1L407.2,472.2L395,474.6L407.2,477.8L422.8,479.6L437.2,481.8L442.8,480L452,479.5L462.8,477.8L473.9,476.7L482,475.5L489.4,472.9L500.6,468.9L511.7,465.6L518.3,462.2L540.6,461.6L562.8,461.1L575,460.8L589.4,459.6L603.9,456.8L618.3,453.9L627,454.4L637.1,457.3L645.8,458.8L644.3,464.6L648.7,463.1L661.7,457.9L676.1,454.4L699.2,453.9L725.2,455L754.1,453.9L777.2,456.8L797.4,460.8L813.3,464.6L806.1,468.9L803.2,471.8L794.6,477.6L806.1,481.9L823.4,483.9L828.7,484.8L828.7,494.3ZM448,476L454,474.4L460.5,475.5L459,478L450,478.2ZM264,475.5L268,475L270,476.5L266,477ZM409,462L413,459.5L415,461L411,463.5ZM416,458.5L420,456L421.5,457.5L418,460ZM423,455L427,452.5L428,454L424.5,456.5ZM400,470L408,469L408,470.5L400,471.5ZM551.5,214.4L555.2,214.2L553.0,216.3ZM556.4,215.5L558.4,214.2L558.8,216.2L558.4,217.5L556.9,217.1ZM560.3,214.0L561.7,214.5L562.1,216.4L560.6,217.1L559.3,215.4ZM563.1,215.4L560.5,214.6L563.5,213.5ZM564.6,217.0L563.0,216.0L565.2,214.2L566.8,214.9L566.0,216.7ZM568.0,215.9L566.4,213.8L568.4,213.1L570.5,214.3ZM574.3,217.4L572.4,218.2L571.6,215.4L574.0,216.0ZM271.0,339.4L272.2,339.4L272.2,340.4L271.0,340.4ZM273.7,342.9L274.9,342.9L274.9,343.9L273.7,343.9ZM278.2,352.7L279.4,352.7L279.4,353.7L278.2,353.7ZM273.5,361.0L274.7,361.0L274.7,362.0L273.5,362.0ZM283.3,364.7L284.5,364.7L284.5,365.7L283.3,365.7ZM305.0,363.0L306.2,363.0L306.2,364.0L305.0,364.0ZM243.2,367.8L244.4,367.8L244.4,368.8L243.2,368.8ZM249.4,368.6L250.6,368.6L250.6,369.6L249.4,369.6ZM237.8,374.0L239.0,374.0L239.0,375.0L237.8,375.0ZM239.0,376.0L240.2,376.0L240.2,377.0L239.0,377.0ZM246.3,377.4L247.5,377.4L247.5,378.4L246.3,378.4ZM244.7,380.5L245.9,380.5L245.9,381.5L244.7,381.5ZM264.4,375.4L265.6,375.4L265.6,376.4L264.4,376.4ZM284.4,374.0L285.6,374.0L285.6,375.0L284.4,375.0ZM286.8,374.8L288.0,374.8L288.0,375.8L286.8,375.8ZM294.7,378.9L295.9,378.9L295.9,379.9L294.7,379.9ZM310.7,384.2L311.9,384.2L311.9,385.2L310.7,385.2ZM242.8,418.6L244.0,418.6L244.0,419.6L242.8,419.6ZM771.6,313.3L772.8,313.3L772.8,314.3L771.6,314.3ZM771.0,322.9L772.2,322.9L772.2,323.9L771.0,323.9ZM754.5,333.6L755.7,333.6L755.7,334.6L754.5,334.6ZM759.7,330.1L760.9,330.1L760.9,331.1L759.7,331.1ZM782.7,333.6L783.9,333.6L783.9,334.6L782.7,334.6ZM793.2,334.7L794.4,334.7L794.4,335.7L793.2,335.7ZM800.8,337.3L802.0,337.3L802.0,338.3L800.8,338.3ZM810.1,334.2L811.3,334.2L811.3,335.2L810.1,335.2ZM816.9,342.5L818.1,342.5L818.1,343.5L816.9,343.5ZM818.3,345.6L819.5,345.6L819.5,346.6L818.3,346.6ZM823.1,348.2L824.3,348.2L824.3,349.2L823.1,349.2ZM795.3,377.4L796.5,377.4L796.5,378.4L795.3,378.4ZM809.0,393.9L810.2,393.9L810.2,394.9L809.0,394.9ZM784.4,361.0L785.6,361.0L785.6,362.0L784.4,362.0ZM784.8,364.5L786.0,364.5L786.0,365.5L784.8,365.5ZM806.0,364.0L807.2,364.0L807.2,365.0L806.0,365.0ZM653.6,342.9L654.8,342.9L654.8,343.9L653.6,343.9ZM651.1,354.7L652.3,354.7L652.3,355.7L651.1,355.7ZM652.1,358.1L653.3,358.1L653.3,359.1L652.1,359.1ZM624.7,353.7L625.9,353.7L625.9,354.7L624.7,354.7ZM625.3,357.5L626.5,357.5L626.5,358.5L625.3,358.5ZM609.0,361.3L610.2,361.3L610.2,362.3L609.0,362.3ZM604.8,365.1L606.0,365.1L606.0,366.1L604.8,366.1ZM623.8,380.9L625.0,380.9L625.0,381.9L623.8,381.9ZM628.0,379.3L629.2,379.3L629.2,380.3L628.0,380.3ZM594.7,423.4L595.9,423.4L595.9,424.4L594.7,424.4ZM615.6,421.7L616.8,421.7L616.8,422.7L615.6,422.7ZM618.0,422.4L619.2,422.4L619.2,423.4L618.0,423.4ZM653.8,433.4L655.0,433.4L655.0,434.4L653.8,434.4ZM488.1,282.9L489.3,282.9L489.3,283.9L488.1,283.9ZM490.5,284.0L491.7,284.0L491.7,285.0L490.5,285.0ZM504.5,293.0L505.7,293.0L505.7,294.0L504.5,294.0ZM506.2,298.5L507.4,298.5L507.4,299.5L506.2,299.5ZM492.3,318.4L493.5,318.4L493.5,319.4L492.3,319.4ZM494.0,320.8L495.2,320.8L495.2,321.8L494.0,321.8ZM473.1,436.2L474.3,436.2L474.3,437.2L473.1,437.2ZM487.7,443.8L488.9,443.8L488.9,444.8L487.7,444.8ZM457.4,445.6L458.6,445.6L458.6,446.6L457.4,446.6ZM519.0,246.0L520.2,246.0L520.2,247.0L519.0,247.0ZM533.0,240.0L534.2,240.0L534.2,241.0L533.0,241.0ZM646.0,426.6L649.2,426.6L649.2,428.2L646.0,428.2ZM777.6,350.3L775.8,349.7L776.2,348.7L777.2,348.4L778.0,349.4ZM778.5,351.2L780.3,350.9L779.4,352.5ZM782.1,353.9L781.1,354.0L780.2,353.0L781.1,352.6L781.5,352.3ZM785.7,353.9L785.0,354.9L783.9,355.0L783.8,353.5ZM786.0,353.8L787.2,354.1L786.3,355.6L785.0,354.6ZM787.4,356.4L789.0,355.5L789.7,356.5L788.7,357.6ZM791.6,356.3L790.0,357.6L790.0,355.7ZM791.4,357.5L792.8,358.9L790.8,358.9ZM796.3,358.7L797.8,359.3L796.8,360.5ZM805.9,364.1L804.6,364.2L803.9,363.7L804.8,362.6L805.8,362.9ZM806.8,369.6L804.6,369.5L805.6,368.4ZM807.8,368.7L806.7,368.4L806.0,367.8L808.1,367.4ZM810.5,371.8L809.1,371.6L809.0,370.2L811.2,370.6ZM809.3,373.3L810.4,373.9L809.1,374.4ZM803.4,378.9L802.0,379.5L801.1,378.5L803.0,377.7ZM803.6,380.9L802.0,380.0L804.3,379.7ZM805.3,379.1L806.7,379.8L805.7,381.2L804.7,380.7L804.5,379.5ZM825,373.5L827.5,372.5L828.5,374.5L826,376ZM404.3,303.6L404.9,304.4L403.9,305.4L403.1,305.0ZM406.2,305.3L406.4,303.8L407.6,305.6ZM406.4,308.3L406.7,306.6L408.3,307.0ZM407.8,308.1L409.6,308.4L409.1,309.2ZM411.1,309.2L409.8,308.0L410.9,307.2ZM429.8,317.3L430.5,318.7L428.4,318.5L429.0,317.0ZM427.4,319.6L428.9,319.9L429.4,320.9L427.7,321.6L426.6,320.7ZM430.3,319.3L431.5,320.7L429.4,320.9L428.8,320.2ZM431.6,325.5L431.8,324.1L433.1,325.5ZM431.5,325.8L433.0,325.9L432.9,326.9L432.1,327.6ZM433.8,328.7L432.6,327.9L432.9,327.3L434.4,327.0L434.9,328.2Z"/><path stroke-width="1" fill="#fcea70" d="M384.8,323.3L386.2,322.2L387.8,320.2L391.6,319.9L396.0,321.3L395.7,325.4L395.4,327.9L392.1,327.7L389.1,324.8L388.6,324.1ZM392.1,327.7L395.4,327.9L397.3,330.4L399.8,331.5L402.3,330.2L404.7,330.7L405.9,331.9L405.6,333.7L403.9,332.4L401.4,332.4L400.6,334.0L399.0,333.3L396.5,332.5L395.4,331.4L393.2,329.9L391.9,329.2ZM404.2,315.7L407.5,316.1L406.4,316.7ZM422.5,315.6L425.1,315.7L424.8,316.4L422.5,316.4ZM405.9,331.9L408.8,328.7L410.0,327.7L413.8,326.6L415.8,325.6L414.6,326.9L413.0,330.4L414.1,332.4L414.6,334.2L417.9,334.5L422.0,335.8L421.5,339.4L422.8,342.7L422.8,344.0L418.2,343.2L417.9,346.3L418.7,347.6L417.9,352.9L414.6,350.1L412.1,348.5L409.2,346.2L405.6,344.7L403.4,343.7L405.6,339.4L405.6,334.5ZM430.2,382.5L431.5,378.2L435.8,377.7L437.3,378.6L438.0,382.3L441.4,382.7L441.7,385.5L443.7,385.6L443.4,388.1L440.9,390.9L436.8,390.7L438.0,387.4L432.7,385.1ZM438.3,395.7L440.9,396.6L445.0,399.4L445.2,401.4L442.7,403.4L440.1,403.2L437.0,401.9L437.3,398.6ZM541.2,249.8L544.5,250.6L547.0,250.3L551.1,249.0L552.7,246.5L553.6,244.9L552.7,241.6L556.0,239.9L556.8,237.5L559.3,234.2L562.6,233.4L565.9,232.5L567.5,232.2L571.6,233.0L574.1,232.5L575.8,230.9L579.0,230.9L580.7,231.7L583.6,231.2L584.0,230.4L579.0,229.2L574.9,229.1L569.2,230.1L564.2,231.2L559.3,233.0L556.0,235.0L553.6,238.3L550.3,240.8L546.2,241.9L542.0,244.0L541.2,246.5ZM572.5,237.8L574.9,239.1L574.1,240.3L570.0,242.4L568.0,244.0L568.4,246.0L570.8,247.5L575.8,246.7L578.7,246.5L579.0,246.5L582.3,244.0L584.8,242.6L582.3,240.8L582.3,238.0L581.5,235.8L579.9,233.8L579.9,232.5L580.7,231.7L579.0,230.9L575.8,230.9L574.1,232.5L571.6,233.0L567.5,232.2L571.6,234.2L572.0,235.8ZM551.1,254.4L553.6,253.9L553.2,255.6L551.4,255.2ZM516.6,260.8L519.8,261.1L522.6,260.2L523.1,258.0L522.8,257.0L521.0,257.0L519.8,256.4L520.7,255.6L519.8,255.2L519.0,256.4L516.6,256.9L517.4,258.8ZM544.2,272.3L544.5,270.5L547.8,270.5L550.3,268.9L555.5,269.5L555.5,271.0L553.2,271.5L553.4,273.3L555.4,274.5L557.2,276.6L559.3,277.1L563.4,279.9L561.0,279.4L560.3,280.7L561.1,281.9L559.3,283.5L558.8,283.5L559.3,281.9L558.5,280.2L556.0,278.9L553.6,277.8L551.1,276.3L549.8,275.0L549.1,273.5L547.3,273.0L545.5,274.0ZM553.6,283.5L558.5,283.2L558.0,285.6L553.6,284.2ZM546.6,278.6L548.8,278.6L548.8,281.5L547.0,281.9ZM561.0,267.1L561.0,266.1L563.9,264.6L564.2,264.8L570.0,265.3L569.5,266.4L563.4,267.4ZM555.5,271.0L555.5,269.5L559.6,268.9L560.1,269.5L563.9,270.5L564.7,272.3L564.7,274.8L566.7,276.9L569.8,276.4L570.8,278.1L567.5,278.9L565.9,280.7L564.7,279.4L564.9,277.3L563.4,276.3L559.3,274.5L557.7,272.8L556.8,271.7ZM576.6,266.6L579.0,266.6L582.3,269.5L581.8,271.7L579.4,271.2L579.4,269.5ZM567.5,255.1L567.5,253.7L574.1,253.4L576.6,254.4L575.8,255.1L572.1,257.2L570.5,256.7L570.5,255.4ZM598.8,274.5L604.5,275.8L607.0,275.8L609.5,277.3L609.3,278.2L607.0,278.2L604.5,278.4L601.2,277.8L601.2,276.1ZM604.5,278.4L607.0,278.2L607.0,281.9L606.7,280.7L604.9,280.1ZM591.4,292.6L593.5,292.9L596.8,291.1L597.1,292.9L593.8,294.2L595.5,295.8L594.7,296.7L592.2,298.0L590.6,297.5L591.4,294.2ZM589.4,294.5L590.6,297.5L591.4,294.2L591.4,292.6L591.9,291.2L593.0,289.3L592.0,289.1L590.7,291.6L590.2,293.4ZM609.5,298.1L611.8,296.7L612.6,299.1L611.1,298.5ZM617.9,306.2L619.3,308.3L623.8,308.7L625.1,306.2L625.7,305.1L625.6,303.2L625.1,303.2L623.8,304.1L621.8,306.2L619.3,306.2ZM619.3,277.3L621.8,276.4L625.1,278.1L626.7,278.1L629.2,275.9L632.0,276.6L631.7,278.1L634.8,278.2L639.1,282.0L642.4,284.5L640.7,284.7L639.1,286.3L635.8,288.0L633.6,287.5L633.3,285.8L631.7,284.8L626.7,283.2L621.8,284.5L621.5,281.5L620.2,281.0L620.2,278.9ZM648.9,277.9L649.8,276.4L653.9,275.3L656.3,275.6L662.9,275.6L664.9,276.6L661.3,278.6L658.8,279.4L654.7,280.2L653.9,281.0L647.3,280.9L649.8,279.9L653.0,278.9ZM644.5,281.4L645.6,280.2L647.0,278.9L649.8,279.9L647.3,280.9L653.9,281.0L656.0,284.7L650.6,285.5L650.2,283.5L648.1,284.2L644.8,285.2L644.5,284.8L645.3,283.5ZM677.4,265.1L684.3,262.5L693.3,263.8L695.0,260.5L700.7,261.5L701.6,263.0L709.0,263.8L715.5,264.9L721.3,263.4L724.9,264.1L722.9,266.7L727.9,267.2L730.0,269.2L725.4,269.7L720.5,272.0L716.8,274.1L713.1,276.1L705.7,277.6L699.1,275.9L691.7,275.6L689.2,273.3L682.6,271.7L681.8,267.9ZM697.6,312.5L699.4,311.0L701.1,309.0L702.4,311.8L704.8,312.5L705.7,315.2L709.8,319.7L709.8,321.8L707.3,322.5L706.0,322.5L706.5,320.5L705.2,317.2L702.9,315.7L700.9,316.1L699.1,316.7L699.4,313.9L698.3,313.9ZM764.9,350.3L770.6,352.2L773.1,355.0L775.6,355.9L776.0,358.3L777.2,360.8L780.5,363.3L778.8,362.9L775.6,362.4L773.1,360.0L770.6,358.5L769.0,360.0L768.2,361.1L764.9,361.0ZM787.4,355.0L789.4,357.2L788.4,356.7ZM817.0,402.6L819.6,404.0L821.6,406.2L822.4,407.8L825.7,407.8L826.5,408.0L825.4,410.5L824.1,411.0L823.7,412.6L821.3,414.4L820.4,413.9L821.1,412.1L818.8,410.6L820.1,408.5L820.3,406.5L817.5,403.9ZM817.0,412.6L819.6,414.6L817.2,417.5L814.7,418.8L813.7,421.5L810.9,422.6L806.8,421.6L807.6,420.0L809.6,418.4L813.4,416.7L814.7,414.7ZM548.6,296.2L549.9,293.9L551.9,292.6L551.9,291.4L557.7,292.7L559.0,294.5L562.6,296.0L565.1,296.0L565.9,293.4L568.4,291.9L571.2,292.9L574.1,294.0L574.1,309.8L574.1,313.1L572.5,313.1L572.5,313.9L559.3,307.5L557.7,308.2L556.4,308.8L552.7,307.4L549.4,305.7L549.1,302.4L549.3,299.1ZM504.9,311.5L505.9,313.9L506.2,316.7L505.9,319.5L509.2,318.7L512.9,321.7L514.1,320.3L524.0,320.5L524.0,318.9L522.3,304.9L525.1,304.9L518.7,301.1L518.7,303.2L513.3,303.2L513.3,307.4L511.6,307.4L511.6,311.0ZM511.1,331.2L512.4,329.7L514.1,329.6L515.4,330.4L516.1,332.0L514.1,334.7ZM514.1,334.7L516.1,332.0L517.4,332.2L518.2,333.8L519.2,335.3L520.7,337.4L520.7,338.8L517.4,337.0ZM533.0,327.9L533.8,329.6L533.8,333.7L535.0,336.0L536.0,335.6L535.6,331.2L534.6,327.9ZM556.8,337.8L557.7,340.2L559.3,342.4L560.1,340.2L563.4,340.2L563.6,338.9L565.1,337.8L570.0,339.1L573.3,337.6L578.2,337.4L574.9,333.7L572.5,331.7L571.6,329.6L570.7,327.9L567.5,329.9L564.2,331.2L561.0,333.3L558.5,333.7ZM551.3,352.6L552.7,354.2L554.4,353.6L556.8,354.1L559.3,351.8L559.6,349.6L562.1,346.8L562.6,342.7L563.6,340.2L563.4,340.2L560.1,340.2L559.3,342.4L559.3,343.0L554.4,342.4L555.7,343.7L556.7,346.8L556.7,349.1L553.6,349.8L552.4,351.9ZM593.0,322.2L593.8,318.0L596.3,316.4L598.3,320.5L600.8,322.2L603.9,325.1L602.7,325.4L598.8,322.2L595.5,321.8ZM542.4,243.3L544.1,243.0L544.6,244.3L542.4,244.3ZM545.8,240.9L543.4,240.7L544.9,239.7ZM544.2,238.8L546.2,239.0L544.5,239.7ZM545.5,239.9L546.2,241.0L544.8,241.8L544.0,240.5ZM551.1,237.3L550.2,238.1L548.7,237.2L550.6,236.5ZM550.2,237.6L549.7,236.1L551.4,236.8ZM554.4,235.9L552.8,235.5L553.1,234.1L554.7,235.1ZM554.6,235.7L553.2,236.2L553.1,234.5ZM554.2,231.5L553.2,232.9L552.1,231.7L553.1,230.8ZM556.0,232.3L554.9,233.1L554.7,231.2ZM556.3,231.3L556.7,230.5L558.1,230.1L558.1,231.1L557.2,231.6ZM563.6,229.2L562.5,231.0L562.0,229.3ZM564.9,230.9L565.6,232.1L564.0,232.4L563.8,231.3ZM566.7,227.2L567.4,228.5L565.8,229.2L564.8,228.3ZM570.1,229.9L569.1,229.7L570.2,228.7L571.4,229.2ZM549.8,255.0L548.3,253.6L549.6,252.6L551.0,253.0L551.0,254.3ZM548.4,253.0L548.3,252.1L550.1,251.9L550.8,252.0L550.2,253.5ZM550.3,255.9L549.6,255.8L549.5,254.0L551.5,253.9L552.0,255.6ZM555.3,253.8L552.6,254.2L553.3,252.3ZM552.2,256.3L552.1,254.7L553.5,254.4L554.7,255.0L553.8,256.3ZM569.1,246.0L568.2,247.5L567.0,245.8ZM570.0,246.5L571.2,246.9L571.0,247.4L569.6,248.1L569.3,247.1ZM570.0,249.5L569.2,248.8L570.8,247.8L572.3,248.7L571.2,249.6Z"/><path stroke-width="1" fill="#fad55c" d="M381.4,322.0L382.5,319.7L384.2,319.4L383.4,317.6L383.4,316.7L386.3,316.7L386.3,319.7L387.8,320.2L386.2,322.2L384.8,323.3ZM393.2,310.2L396.5,308.2L400.6,308.0L406.4,310.5L409.7,312.0L411.0,312.8L405.2,313.4L406.4,312.0L403.9,310.6L399.0,309.5L396.5,309.5ZM410.7,315.7L413.3,313.3L417.9,313.4L420.5,315.4L417.1,316.1L415.1,316.7ZM403.4,343.7L405.6,344.7L409.2,346.2L408.8,348.5L404.7,351.8L403.1,354.2L401.0,353.2L401.0,351.6L401.4,350.1L399.8,349.6L400.1,347.6L401.4,345.2ZM418.7,364.1L421.2,363.6L425.6,362.1L426.1,365.7L431.0,367.9L433.5,368.5L434.3,372.6L437.1,372.8L437.6,374.8L438.1,377.2L437.3,378.6L435.8,377.7L431.5,378.2L430.2,382.5L427.8,382.2L426.9,383.5L424.1,381.8L422.5,383.5L421.2,381.4L420.0,378.1L418.7,374.4L419.0,371.5L419.5,369.8L420.0,366.7ZM551.1,249.0L551.9,250.6L553.6,253.4L554.4,254.9L556.5,254.7L559.3,253.6L560.1,251.4L561.0,249.5L563.9,247.7L561.4,245.7L561.8,243.2L565.1,241.6L568.0,239.9L569.2,238.0L572.5,237.8L572.0,235.8L571.6,234.2L567.5,232.2L565.9,232.5L562.6,233.4L559.3,234.2L556.8,237.5L556.0,239.9L552.7,241.6L553.6,244.9L552.7,246.5ZM518.5,277.1L519.5,277.1L522.8,277.6L521.5,280.2L521.5,281.9L520.7,283.5L520.8,284.8L518.4,285.2L518.5,282.7L517.4,282.2L518.5,279.9ZM537.1,262.0L538.6,261.5L540.1,261.6L542.9,262.5L543.4,264.1L542.5,264.6L539.9,263.8ZM542.9,269.9L545.5,267.7L548.8,267.9L550.3,268.9L547.8,270.5L544.5,270.5ZM548.8,267.9L550.3,268.1L554.4,267.9L555.7,265.9L557.7,265.4L561.0,267.1L559.6,268.9L555.5,269.5L550.3,268.9ZM553.1,263.3L557.2,262.1L561.0,263.3L563.9,264.6L561.0,266.1L561.0,267.1L557.7,265.4L555.7,265.9ZM559.6,268.9L561.0,267.1L563.4,267.4L569.5,266.4L570.5,267.1L567.5,270.0L566.4,270.2L563.9,270.5L560.1,269.5ZM563.9,270.5L566.4,270.2L568.2,272.3L570.0,272.7L570.3,273.3L569.8,276.4L566.7,276.9L564.7,274.8L564.7,272.3ZM570.3,273.3L574.9,274.1L577.4,273.5L580.0,274.1L579.0,276.9L576.2,277.4L574.1,278.1L570.8,278.1L569.8,276.4ZM565.9,280.7L567.5,278.9L570.8,278.1L574.1,278.1L576.2,277.4L575.8,278.9L572.5,278.9L571.6,279.9L570.3,279.6L571.3,281.9L572.5,283.5L571.2,283.7L570.8,286.0L569.7,286.0L568.4,285.2L567.9,283.0ZM571.8,261.1L571.8,260.0L571.6,258.8L572.1,257.2L575.8,255.1L576.6,254.4L579.0,253.7L583.6,254.4L586.8,258.0L585.3,260.2L583.2,261.5L577.4,261.3ZM609.5,277.3L612.8,277.3L614.4,279.4L613.4,282.9L612.8,282.7L611.6,280.9L609.5,282.0L607.0,281.9L607.0,278.2L609.3,278.2ZM545.3,290.4L546.5,288.9L547.1,285.3L549.8,284.7L551.1,285.2L550.3,287.6L551.1,290.1L549.8,290.4L551.9,291.4L551.9,292.6L549.9,293.9L548.6,296.2L547.8,293.2ZM555.4,323.5L556.8,325.0L557.7,329.2L556.0,329.6L558.5,333.7L561.0,333.3L564.2,331.2L567.5,329.9L570.7,327.9L570.0,324.6L569.5,322.6L570.8,320.2L572.5,320.2L572.5,313.9L559.3,307.5L557.7,308.2L559.3,312.3L558.5,318.4ZM508.3,327.9L510.3,326.8L510.5,325.3L514.1,325.8L515.4,326.3L519.0,327.9L519.8,329.2L519.8,332.0L518.2,333.8L517.4,332.2L516.1,332.0L515.4,330.4L514.1,329.6L512.4,329.7L511.1,331.2ZM534.6,327.9L535.6,331.2L536.0,335.6L537.4,335.5L537.6,331.2L538.9,328.7L538.9,326.8L536.6,325.6ZM569.2,367.4L572.5,367.4L572.5,363.9L573.1,364.6L574.6,364.6L577.4,365.4L579.9,366.9L582.0,368.0L582.0,366.1L579.7,365.4L580.0,363.3L579.7,361.3L580.5,360.0L583.5,359.6L587.1,361.5L587.8,363.8L587.3,366.6L586.8,368.4L587.3,369.0L582.7,370.7L583.0,371.7L580.5,372.3L577.4,375.4L574.6,375.3L571.5,374.9L569.2,372.6ZM574.6,375.3L577.4,375.4L580.5,372.3L583.0,371.7L587.1,373.5L587.3,378.1L586.3,381.0L584.5,382.8L581.3,382.5L578.6,379.7L575.8,378.1ZM587.1,361.5L588.9,361.6L589.9,365.1L589.7,369.8L591.9,372.3L590.9,374.0L589.4,372.3L587.3,369.0L586.8,368.4L587.8,363.8ZM581.0,350.4L581.7,348.3L583.6,347.6L583.2,349.9L583.6,351.4L582.3,353.2L581.3,353.4ZM600.4,347.3L600.4,341.4L601.9,339.6L602.1,339.1L607.0,337.8L611.9,332.8L610.3,332.8L607.0,331.7L604.5,330.5L603.4,328.1L604.4,327.1L606.2,328.9L610.3,327.6L616.9,326.3L617.2,328.7L613.6,335.3L611.9,338.6L608.6,342.4L604.5,345.5L601.4,348.8ZM570.5,284.2L570.6,282.6L572.6,283.0L571.9,284.5ZM570.9,282.2L569.4,283.1L569.1,281.8ZM570.6,283.0L570.5,282.2L571.5,281.5L572.0,283.3ZM571.5,283.9L571.7,282.8L573.0,282.8L572.9,284.1ZM573.0,283.3L574.7,284.4L573.9,285.1ZM574.9,284.7L576.8,285.2L575.6,285.8ZM575.7,286.0L575.6,286.6L574.7,287.4L573.6,286.4ZM576.1,288.9L575.5,287.4L577.5,288.0ZM382.5,346.0L384.5,346.0L384.5,347.2L382.5,347.2Z"/><path stroke-width="1" fill="#f7c14b" d="M417.2,376.1L418.7,374.4L420.0,378.1L421.2,381.4L422.5,383.5L422.8,385.5L420.4,387.1L420.7,390.4L418.4,392.9L417.9,397.0L417.4,400.3L418.2,402.2L417.1,405.2L416.2,409.3L415.1,413.4L414.9,418.4L415.4,421.6L414.1,424.9L413.8,429.0L414.6,431.5L420.4,432.0L420.2,432.5L420.2,436.3L422.8,436.9L419.5,437.3L414.6,435.6L411.3,433.2L409.7,429.9L408.8,425.8L408.8,422.5L411.3,418.4L413.0,415.1L411.8,414.2L412.1,411.0L412.1,407.2L413.6,404.4L415.3,400.3L415.4,396.2L415.8,392.9L417.1,387.9L417.4,382.2L417.6,378.1ZM538.6,261.5L540.7,258.8L544.3,258.2L544.5,258.0L542.9,260.8L542.9,262.5L540.1,261.6ZM567.5,270.0L570.5,267.1L573.8,267.4L576.6,266.6L579.4,269.5L579.4,271.2L581.8,271.7L580.0,274.1L577.4,273.5L574.9,274.1L570.3,273.3L570.0,272.7L568.2,272.3L566.4,270.2ZM592.0,287.6L592.5,286.8L593.4,285.5L595.5,285.5L599.6,285.2L602.7,284.8L600.9,286.0L600.4,289.4L596.8,291.1L593.5,292.9L591.9,291.2L593.0,289.3ZM603.2,319.0L604.0,317.4L609.5,317.7L613.6,315.4L618.5,314.8L620.3,318.7L618.8,320.3L613.6,323.0L607.0,325.0L604.5,325.1L604.0,324.1L603.4,321.3ZM609.8,266.2L610.3,265.4L612.8,263.4L616.9,261.0L623.4,262.1L630.8,262.8L634.1,262.1L633.3,257.2L639.9,256.4L646.5,255.1L649.8,256.9L653.9,257.2L659.6,258.4L664.6,262.5L669.5,262.1L672.8,263.8L676.6,265.3L673.6,268.7L669.5,268.4L668.3,271.2L664.6,272.0L664.9,276.1L662.9,275.6L656.3,275.6L653.9,275.3L649.8,276.4L646.5,277.9L644.8,278.6L642.4,278.2L641.5,276.1L639.7,274.1L635.0,274.5L633.3,273.2L629.2,271.2L625.1,272.0L625.1,278.1L621.8,276.4L619.3,277.3L619.3,275.6L616.9,272.8L620.2,271.5L620.2,269.0L616.9,268.7L613.6,269.5ZM678.9,310.3L678.0,305.7L678.0,303.6L680.5,302.9L680.7,304.4L684.9,304.7L683.0,307.0L684.8,307.7L685.3,311.0L684.8,312.0L684.0,309.3L681.8,309.8L680.2,310.2ZM664.2,330.2L665.4,330.4L667.5,333.7L667.0,335.6L665.4,336.3L664.2,334.5ZM701.2,325.9L701.6,323.8L702.4,322.5L706.0,322.5L707.3,322.5L709.8,321.8L709.8,325.8L707.0,326.9L707.3,327.9L705.3,329.1L703.2,328.6L702.0,326.3ZM720.5,381.8L724.9,379.7L728.7,378.9L732.8,377.2L734.1,374.3L736.3,374.4L736.1,373.1L738.6,369.8L741.5,368.9L744.0,370.5L746.0,370.3L746.8,366.9L748.1,366.4L751.1,364.6L751.7,365.4L755.5,366.1L758.0,366.1L756.6,368.2L755.8,370.7L759.1,372.3L762.1,374.8L764.5,374.8L765.9,370.7L766.0,366.6L767.3,363.8L769.0,367.4L769.5,369.7L771.9,370.7L772.3,373.1L773.4,377.1L777.2,379.2L778.8,382.5L781.0,384.6L784.3,387.6L785.1,391.2L785.4,393.4L784.6,397.0L783.4,399.6L781.6,401.9L780.0,406.0L779.5,407.7L776.0,408.5L773.6,410.3L770.6,408.8L769.0,409.8L764.9,408.7L762.9,406.8L762.4,404.9L760.3,404.4L759.9,401.1L759.1,400.3L756.6,403.2L755.8,403.2L753.4,400.3L752.5,399.0L748.4,397.8L744.3,398.6L740.2,399.1L736.9,400.6L736.1,401.7L730.3,401.7L727.0,403.6L723.8,403.4L722.1,402.4L723.3,398.6L722.1,395.3L720.8,391.2L719.3,388.8L719.6,386.3ZM771.0,412.9L773.9,413.6L776.9,413.3L776.7,415.4L775.1,417.5L773.1,417.5L771.8,415.4ZM519.8,329.2L523.1,329.1L524.3,329.1L528.4,330.4L528.6,333.7L527.9,337.6L524.8,337.4L520.7,338.8L520.7,337.4L519.2,335.3L518.2,333.8L519.8,332.0ZM524.3,326.6L524.3,329.1L528.4,330.4L528.4,327.9L533.0,327.9L534.6,327.9L536.6,325.6L534.6,323.8L533.3,321.3L532.2,321.3L528.9,322.6L526.4,324.0L525.9,325.1ZM547.0,338.4L548.6,339.6L549.1,342.2L554.4,342.4L559.3,343.0L559.3,342.4L557.7,340.2L556.8,337.8L558.5,333.7L556.0,329.6L557.7,329.2L556.8,325.0L555.7,327.9L553.6,332.0L551.9,335.1L550.3,334.7L547.8,336.1ZM553.2,355.9L554.4,355.7L560.1,355.7L561.8,359.3L564.2,359.2L565.1,357.5L568.8,358.0L569.2,362.1L569.7,364.4L572.5,363.9L572.5,367.4L569.2,367.4L569.2,372.6L571.5,374.9L568.2,375.6L563.4,374.6L556.0,374.6L552.4,374.4L552.4,372.3L553.6,368.2L555.7,364.1L554.4,360.8ZM552.7,354.2L554.4,353.6L553.2,355.9L552.9,355.2ZM582.7,370.7L587.3,369.0L589.7,369.8L589.9,365.1L590.6,365.1L594.7,365.2L599.6,363.3L599.9,369.8L598.0,373.1L593.8,375.3L590.2,378.6L591.4,382.2L591.2,385.5L587.3,387.6L587.1,390.2L585.6,390.1L585.6,386.3L584.5,382.8L586.3,381.0L587.3,378.1L587.1,373.5L583.0,371.7ZM614.1,365.7L616.0,371.5L614.7,374.0L612.8,380.5L610.3,387.1L607.3,388.1L604.9,384.6L604.2,381.8L606.2,378.1L605.4,374.0L609.0,371.8L611.9,368.2ZM409.4,412.6L409.8,414.4L408.0,414.0ZM413.0,414.9L413.3,415.6L411.7,416.0L411.2,414.7L412.0,414.3ZM407.7,413.9L408.5,413.8L409.4,414.3L409.4,415.1L408.3,415.2ZM410.9,418.7L409.1,419.3L408.4,418.1L410.4,417.6ZM407.5,418.6L408.9,418.2L409.7,419.0L409.0,420.1L407.4,419.9ZM410.2,417.9L410.6,419.4L408.8,418.7ZM409.9,421.9L409.0,420.8L410.5,420.0L411.3,421.1ZM410.4,422.2L409.5,422.6L409.3,421.7L410.2,421.4ZM411.1,422.2L410.4,423.2L409.2,422.8L409.8,421.3ZM409.0,426.8L407.1,426.4L407.8,425.7L409.7,425.6ZM409.8,426.0L409.6,426.9L408.1,426.9ZM413.0,426.8L412.5,427.2L410.7,427.3L410.9,426.0L411.9,425.4ZM411.0,428.3L412.0,426.9L412.4,428.3ZM411.9,429.2L410.7,428.8L409.6,428.4L411.2,427.5L412.7,428.3ZM409.8,429.3L409.1,428.4L410.7,427.6L411.4,428.7L411.7,429.6ZM411.5,429.9L413.2,428.8L413.8,430.2ZM413.6,432.3L412.7,432.6L412.1,432.6L412.4,431.3L414.2,431.1ZM412.0,433.9L410.9,434.4L411.1,432.4L412.1,432.6ZM412.6,435.8L412.8,437.1L411.2,436.8L411.2,435.8ZM410.5,431.0L412.5,430.1L413.5,430.5L412.4,431.9ZM412.2,430.4L413.1,430.1L414.1,430.9L413.9,431.0L411.8,431.1ZM417.4,432.6L415.5,433.0L415.8,431.4ZM416.6,432.7L415.1,433.5L415.2,432.3ZM416.6,437.3L415.4,436.5L416.9,435.5L417.4,435.7L417.3,437.3ZM417.6,438.5L416.5,438.4L417.0,437.2L418.1,437.4L418.4,437.8Z"/><path stroke-width="1" fill="#f2a83a" d="M301.1,231.5L307.7,232.5L312.6,231.7L319.2,230.9L322.5,230.1L327.4,231.7L335.7,231.7L342.2,232.5L345.5,234.2L352.1,234.2L355.4,233.2L360.3,233.4L365.3,234.2L371.8,233.2L375.1,234.2L376.0,231.7L378.4,228.1L381.7,230.1L383.4,231.7L388.3,233.4L392.4,231.5L398.2,231.5L399.0,233.4L398.2,235.8L391.6,236.6L389.9,239.1L385.0,240.8L380.1,244.0L377.6,247.3L378.4,249.5L380.9,252.3L385.0,252.3L389.9,253.9L393.2,255.1L397.7,255.4L398.2,258.8L400.6,261.3L402.3,261.5L403.4,259.7L403.1,256.4L406.4,253.9L407.2,251.4L403.9,249.3L405.6,247.3L404.7,243.6L411.3,243.6L414.6,244.9L417.9,245.7L418.7,249.0L421.2,249.8L424.5,249.0L426.9,246.8L430.2,250.6L432.7,253.9L437.6,256.4L440.9,258.8L441.4,260.5L439.3,261.3L434.3,263.4L427.8,263.3L423.6,263.8L420.4,265.8L424.5,265.4L427.3,265.8L426.1,267.4L426.4,269.5L429.4,270.4L432.7,271.0L433.5,268.9L434.3,270.4L431.9,271.7L427.8,272.8L424.5,274.5L424.5,272.8L426.9,271.5L422.8,271.7L421.5,268.7L419.2,268.1L416.2,271.5L410.2,272.0L407.2,273.6L403.1,274.5L403.1,275.6L397.3,276.9L397.3,271.2L394.0,269.5L387.5,266.6L385.8,267.1L376.8,265.4L331.1,265.4L328.3,263.8L323.3,262.1L322.5,259.7L320.0,258.0L318.4,256.0L319.2,254.1L315.9,251.4L311.0,248.2L306.9,249.0L304.4,247.3L301.1,246.8ZM427.1,263.9L431.4,264.9L430.2,265.3ZM397.3,242.7L401.4,243.7L400.6,244.9ZM402.3,253.1L403.6,253.9L402.8,254.2ZM414.6,326.9L415.8,325.6L417.9,325.9L420.4,328.7L424.5,328.6L427.8,328.7L431.0,328.4L432.7,330.4L434.3,332.0L434.3,334.5L432.2,336.1L433.2,337.4L431.9,338.9L429.4,339.4L426.9,339.3L427.8,341.9L425.3,344.4L422.8,344.0L422.8,342.7L421.5,339.4L422.0,335.8L417.9,334.5L414.6,334.2L414.1,332.4L413.0,330.4ZM401.0,351.6L401.0,353.2L403.1,354.2L404.7,351.8L408.8,348.5L409.2,346.2L412.1,348.5L414.6,350.1L417.9,352.9L413.3,354.6L411.3,358.0L413.8,361.6L417.1,361.6L416.9,364.1L418.7,364.1L420.0,366.7L419.5,369.8L419.0,371.5L418.7,374.4L417.2,376.1L415.4,374.8L409.7,371.5L407.5,368.7L406.0,365.7L403.9,361.6L401.8,357.8L399.5,355.9L399.3,353.4ZM596.8,291.1L600.4,289.4L600.9,286.0L602.7,284.8L606.7,284.8L607.5,286.0L609.0,287.1L607.8,288.4L608.6,291.4L611.4,292.6L611.9,295.0L612.8,296.7L611.8,296.7L609.5,298.1L606.5,298.0L602.1,294.7L599.4,293.5L597.1,292.9ZM625.1,272.0L629.2,271.2L633.3,273.2L635.0,274.5L639.7,274.1L641.5,276.1L642.4,278.2L644.8,278.6L646.5,277.9L649.8,276.4L648.9,277.9L653.0,278.9L649.8,279.9L647.0,278.9L645.6,280.2L644.5,281.4L645.3,283.5L644.5,284.8L642.4,284.5L639.1,282.0L634.8,278.2L631.7,278.1L632.0,276.6L629.2,275.9L626.7,278.1L625.1,278.1ZM633.1,297.0L635.8,297.7L642.0,297.0L642.4,295.0L647.0,293.7L648.1,290.9L650.1,289.3L650.6,286.0L656.0,284.7L650.6,285.5L650.2,283.5L648.1,284.2L644.8,285.2L644.5,284.8L642.4,284.5L640.7,284.7L639.1,286.3L635.8,288.0L633.6,287.5L632.8,289.8L632.8,293.4L634.5,294.5ZM664.7,298.6L669.5,300.9L672.8,302.1L677.9,302.6L677.9,300.1L674.4,300.0L669.5,297.5L666.2,296.3ZM697.6,335.3L699.1,336.5L700.7,335.6L703.0,338.6L704.4,343.7L703.0,343.9L699.6,341.4L698.3,338.6ZM713.2,342.7L713.4,343.4L714.7,344.5L717.5,343.7L720.0,343.9L721.8,342.4L722.9,341.1L723.3,338.9L726.2,339.1L727.0,338.9L729.0,337.4L726.6,335.5L724.9,334.5L722.9,337.0L720.5,338.4L718.8,340.7L716.2,342.1L714.4,343.2ZM737.4,280.2L741.5,277.4L743.5,276.9L746.4,275.5L747.9,276.4L746.3,278.6L742.7,280.7L744.1,282.5L741.4,283.8L738.6,283.8L739.0,281.0ZM511.3,300.4L516.9,297.5L517.0,295.0L519.0,291.2L521.8,289.9L523.3,287.1L524.3,287.0L529.4,288.3L530.2,290.9L531.0,293.0L527.1,295.0L524.0,297.0L518.7,298.8L518.7,300.4ZM518.7,300.4L518.7,298.8L524.0,297.0L527.1,295.0L531.0,293.0L530.2,290.9L529.4,288.3L533.0,287.0L537.9,285.3L542.9,285.2L547.1,285.3L546.5,288.9L545.3,290.4L547.8,293.2L548.6,296.2L549.3,299.1L549.1,302.4L549.4,305.7L552.7,307.4L542.9,313.9L539.9,314.4L538.4,314.8L537.9,313.4L535.0,312.0L525.1,304.9L518.7,301.1ZM581.7,348.3L583.6,347.6L588.7,347.6L588.9,344.4L590.6,343.2L589.7,340.2L588.9,339.1L584.0,340.1L583.6,342.2L584.5,342.5L581.8,344.7ZM311.0,252.9L311.6,252.1L312.4,252.4L312.6,253.4L310.9,253.7ZM315.9,253.5L313.8,252.9L315.4,252.0ZM311.9,253.1L313.2,253.4L313.1,254.5L311.7,253.8ZM316.1,255.9L315.2,256.4L314.1,255.5L314.9,254.9ZM317.0,258.8L317.1,260.3L315.1,259.8ZM318.5,259.2L316.8,259.2L316.9,258.4L317.6,258.0L319.0,258.1ZM320.1,263.3L320.6,262.3L321.8,262.9L321.1,264.1ZM319.6,264.4L318.5,263.5L320.0,262.8L321.7,263.8ZM339.2,224.5L338.6,223.7L340.3,222.6L341.2,223.3L340.9,224.9ZM346.3,221.7L343.6,221.5L345.8,220.0ZM342.8,218.8L344.3,217.4L346.1,218.9L345.4,220.4ZM348.6,219.7L350.5,220.2L349.5,221.5ZM356.3,216.9L356.6,218.0L354.8,218.8L353.8,218.3L354.3,217.1ZM356.9,216.7L357.8,217.4L357.8,218.9L356.0,218.7L355.2,217.1ZM359.4,217.3L357.2,219.1L356.6,216.2ZM361.6,215.3L364.1,215.4L363.6,217.1L361.9,216.8ZM363.3,215.5L364.7,216.1L364.6,218.2L361.5,217.4ZM368.2,216.1L367.6,214.8L369.3,213.6L370.8,214.9ZM370.8,213.0L372.4,214.7L369.6,214.8ZM371.7,215.1L370.7,213.8L371.9,213.0L373.4,213.2L373.0,215.0ZM352.4,229.7L352.3,231.0L351.1,231.2L349.8,230.9L349.8,229.4ZM353.5,229.5L355.0,229.0L357.5,229.3L357.5,230.1L354.9,230.8ZM358.9,229.8L356.9,228.9L358.6,226.8ZM364.9,231.1L362.7,230.5L364.3,229.2ZM368.2,230.0L366.9,230.5L365.3,230.4L365.4,228.9L366.8,229.0ZM368.7,226.0L370.5,227.0L367.7,227.6ZM375.6,227.8L376.5,229.1L373.4,229.4L373.6,228.2L374.9,227.3ZM376.6,227.4L374.1,227.6L373.0,226.3L375.1,225.5ZM377.6,227.7L380.5,227.5L379.2,229.5ZM385.3,228.0L384.3,227.2L385.4,225.7L387.4,226.2L387.3,227.4ZM385.3,228.9L385.0,226.6L387.2,228.6ZM390.5,225.9L389.8,224.1L391.0,223.6L392.8,224.0L392.1,225.2ZM379.0,215.4L380.1,217.5L378.0,216.8ZM380.7,214.7L382.0,215.6L381.5,217.5L379.2,216.0ZM387.2,216.8L384.9,218.6L383.3,216.8L385.4,216.1ZM386.5,215.3L389.3,215.4L389.0,216.9L386.6,217.3ZM394.1,216.0L395.1,217.2L392.9,218.2L392.2,216.1ZM395.7,215.0L395.7,214.1L398.3,214.6L397.9,215.3ZM398.9,215.0L401.9,214.1L401.3,215.9L399.4,216.2ZM402.5,216.0L403.4,213.6L406.0,214.6ZM409.6,212.8L407.8,214.1L406.5,213.1L407.1,211.9ZM396.1,230.3L395.8,231.1L394.5,231.3L394.6,230.9L395.3,230.1ZM400.6,231.6L402.3,232.0L402.6,232.8L401.9,233.4L400.8,233.0ZM400.5,233.4L401.6,234.6L400.0,234.7ZM406.4,237.5L404.9,238.4L403.7,237.4L404.5,236.7L406.3,236.7ZM408.4,236.1L409.0,235.9L410.2,236.3L409.5,237.4L408.7,237.1ZM412.5,236.6L411.7,236.6L411.2,236.3L411.3,235.3L412.8,235.3ZM416.0,239.0L414.8,240.0L414.0,239.0L413.6,238.4L415.6,237.9ZM415.4,236.5L415.8,236.3L417.2,237.7L416.1,238.3L414.0,237.4ZM420.2,246.8L419.2,248.3L418.5,246.9ZM423.7,248.6L421.4,248.1L421.6,247.3L423.2,246.8L423.3,247.9ZM425.4,249.7L425.3,248.1L426.8,248.2L426.7,249.6ZM428.6,251.0L428.4,251.9L426.4,251.2L427.4,250.2ZM427.2,255.0L427.3,253.9L428.7,253.5L428.9,255.1ZM431.0,257.2L431.1,255.8L433.0,256.1ZM432.1,250.6L430.7,251.0L429.6,250.4L429.9,249.7L431.5,249.6ZM430.0,252.7L428.5,251.8L430.1,251.0ZM432.6,256.2L431.9,254.5L433.9,255.2ZM435.3,255.4L435.5,255.9L434.8,257.0L433.7,255.5ZM436.6,259.6L436.4,260.8L435.1,260.4L435.4,258.9ZM441.3,261.7L439.7,262.9L439.4,261.4Z"/><path stroke-width="1" fill="#e0912f" d="M424.1,381.8L426.9,383.5L427.8,382.2L430.2,382.5L432.7,385.1L438.0,387.4L436.8,390.7L440.9,390.9L443.4,388.1L444.7,389.9L441.4,392.5L438.3,395.7L437.3,398.6L437.0,401.9L438.9,404.4L439.8,406.0L438.1,408.8L431.0,410.1L430.6,413.1L426.1,413.4L426.1,415.9L428.2,415.9L425.6,417.5L425.3,420.0L422.0,421.6L424.5,424.6L422.0,427.4L419.5,429.4L420.7,432.0L414.6,431.5L413.8,429.0L414.1,424.9L415.4,421.6L414.9,418.4L415.1,413.4L416.2,409.3L417.1,405.2L418.2,402.2L417.4,400.3L417.9,397.0L418.4,392.9L420.7,390.4L420.4,387.1L422.8,385.5L422.5,383.5ZM420.2,432.5L425.8,435.8L423.6,436.4L420.2,436.3ZM517.9,275.0L519.8,274.0L526.4,274.5L530.0,274.6L535.5,276.1L538.3,276.3L537.9,277.8L534.3,278.9L532.5,281.0L533.2,282.4L531.8,283.8L529.7,285.5L525.6,285.6L523.8,286.8L522.6,285.6L520.8,284.8L520.7,283.5L521.5,281.9L521.5,280.2L522.8,277.6L519.5,277.1L518.5,277.1ZM536.8,280.9L538.6,280.6L538.3,281.4ZM556.4,257.4L562.6,255.9L565.1,256.5L570.5,256.7L571.6,258.8L571.8,260.0L571.8,261.1L572.5,263.0L570.3,265.3L564.2,264.8L563.9,264.6L561.0,263.3L557.2,262.1ZM569.5,266.4L570.0,265.3L570.3,265.3L572.5,263.0L571.8,261.1L577.4,261.3L583.2,261.5L585.3,260.2L588.9,260.0L591.4,263.0L595.5,263.8L598.8,264.4L598.3,267.4L595.8,268.5L590.6,270.0L588.4,270.0L591.4,271.5L593.0,271.5L590.6,272.3L588.1,273.0L586.4,271.3L588.1,270.4L585.6,269.5L583.5,269.7L582.3,269.5L579.0,266.6L576.6,266.6L573.8,267.4L570.5,267.1ZM684.8,312.0L685.3,311.0L685.9,309.8L686.4,306.5L688.7,304.1L689.6,302.1L692.8,300.4L693.2,299.5L695.0,300.6L693.5,305.7L695.5,306.5L695.8,309.0L697.4,310.3L699.4,311.0L697.9,312.5L695.8,313.1L693.7,315.6L695.0,318.9L694.5,321.3L696.1,325.1L696.6,327.1L695.1,329.6L695.0,326.3L693.7,321.3L693.3,318.9L690.0,320.0L688.1,319.7L688.4,316.4L686.8,313.4ZM741.4,283.8L744.1,282.5L745.8,285.2L745.6,288.0L742.7,288.9L740.7,289.3L741.0,286.8ZM572.5,313.9L572.5,313.1L574.1,313.1L574.1,309.8L593.7,309.8L594.3,311.5L594.2,314.8L596.3,316.4L593.8,318.0L593.0,322.2L592.5,325.1L590.6,327.9L589.2,330.4L587.3,332.8L588.9,334.5L591.0,337.1L588.9,339.1L584.0,340.1L581.5,338.6L578.2,337.4L574.9,333.7L572.5,331.7L571.6,329.6L570.7,327.9L570.0,324.6L569.5,322.6L570.8,320.2L572.5,320.2ZM560.1,393.0L561.6,393.2L565.9,392.9L565.9,386.8L567.0,390.2L568.7,390.1L570.8,387.6L574.9,388.3L575.4,386.6L577.4,384.8L581.3,382.5L584.5,382.8L585.6,386.3L585.6,390.1L587.1,390.2L586.3,393.0L584.0,395.3L582.3,397.5L579.4,399.9L576.6,401.6L574.1,401.9L570.0,401.9L565.9,403.2L563.3,402.2L562.9,399.8L561.4,396.2ZM583.6,347.6L588.7,347.6L595.0,351.1L597.5,353.7L596.8,356.7L598.0,359.2L599.6,363.3L594.7,365.2L590.6,365.1L589.9,365.1L588.9,361.6L587.1,361.5L583.5,359.6L581.5,356.7L581.3,353.4L582.3,353.2L583.6,351.4L583.2,349.9ZM588.7,347.6L588.9,344.4L590.6,343.2L589.7,340.2L588.9,339.1L591.0,337.1L592.2,338.6L595.5,340.1L598.0,340.4L600.4,339.4L601.9,339.6L600.4,341.4L600.4,347.3L601.4,348.8L599.1,350.4L597.5,353.7L595.0,351.1Z"/><path stroke-width="1" fill="#c96f22" d="M340.4,292.6L344.2,292.6L350.5,294.5L355.1,294.5L355.1,293.7L357.9,293.7L361.2,297.3L363.3,298.3L364.1,297.2L366.9,297.3L369.4,300.8L370.2,302.4L373.2,303.2L372.2,306.5L372.2,309.3L373.2,312.3L375.1,314.8L377.6,316.1L381.7,315.4L383.7,314.3L384.3,311.5L388.3,310.5L390.3,311.0L389.1,313.9L388.3,316.1L386.3,316.6L383.4,316.7L383.4,317.6L384.2,319.4L382.5,319.7L381.4,322.0L378.4,319.5L374.3,320.2L370.2,318.7L365.3,316.6L361.5,314.4L359.3,312.5L359.7,310.2L357.9,307.4L354.6,304.4L352.9,302.1L351.3,300.3L348.5,298.3L347.2,295.0L344.4,293.7L344.2,295.0L345.5,297.5L347.7,300.3L349.6,303.2L351.1,306.0L352.9,308.0L351.8,307.7L348.8,305.4L348.5,303.2L345.5,301.3L344.2,300.0L345.4,298.8L342.6,296.0ZM524.0,263.8L528.1,262.8L533.0,262.5L535.3,261.8L535.8,259.3L533.5,258.8L532.7,257.2L530.5,255.6L529.7,253.9L529.7,251.3L526.4,251.1L528.1,249.6L524.8,249.6L523.1,251.4L524.0,253.9L525.1,255.6L527.6,255.7L528.1,257.5L525.6,258.4L525.9,260.0L524.4,260.8L527.7,261.5L525.6,262.1ZM522.8,257.0L524.0,256.4L522.8,255.2L520.7,255.6L519.8,256.4L521.0,257.0ZM530.0,274.6L531.0,270.4L529.4,268.4L525.3,266.9L528.1,265.8L530.4,265.9L530.5,264.3L533.3,264.6L535.6,262.3L537.1,262.0L539.9,263.8L542.5,264.6L546.5,265.4L545.5,267.7L542.9,269.9L544.5,270.5L544.2,272.3L545.5,274.0L542.9,275.1L540.1,274.5L537.9,276.1L535.5,276.1ZM547.1,275.5L548.6,275.3L548.5,277.9L547.3,277.4ZM542.9,260.8L544.5,258.0L547.0,257.5L547.3,255.7L548.6,255.7L551.1,256.9L556.4,257.4L557.2,262.1L553.1,263.3L555.7,265.9L554.4,267.9L550.3,268.1L548.8,267.9L545.5,267.7L546.5,265.4L543.4,264.1L542.9,262.5ZM576.2,277.4L579.0,276.9L580.7,278.2L584.8,278.2L588.1,276.9L590.6,276.9L593.0,278.1L596.3,278.7L601.2,277.8L604.5,278.4L604.9,280.1L606.7,280.7L605.7,282.9L606.7,284.8L602.7,284.8L599.6,285.2L595.5,285.5L593.4,285.5L592.5,286.8L592.2,285.3L589.7,285.5L588.6,286.5L585.6,286.0L583.3,285.5L581.5,286.5L579.0,285.6L577.9,284.3L576.2,283.0L577.1,281.0L576.1,280.2L575.8,278.9ZM606.2,281.0L607.0,281.9L609.5,282.0L611.6,280.9L612.8,282.7L613.6,284.2L616.9,285.5L621.8,285.2L621.8,284.5L626.7,283.2L631.7,284.8L633.3,285.8L633.6,287.5L632.8,289.8L632.8,293.4L634.5,294.5L633.1,297.0L636.6,301.3L636.1,302.3L634.3,304.6L630.0,304.2L627.1,303.6L625.9,301.4L622.6,302.3L619.3,300.6L616.5,298.5L615.6,296.7L613.4,296.2L612.8,296.7L611.9,295.0L611.4,292.6L608.6,291.4L607.8,288.4L609.0,287.1L607.5,286.0L606.7,284.8L605.7,282.9L606.7,280.7ZM693.7,315.6L695.8,313.1L697.6,312.5L698.3,313.9L699.4,313.9L699.1,316.7L700.9,316.1L702.9,315.7L705.2,317.2L706.5,320.5L706.0,322.5L702.4,322.5L701.6,323.8L702.0,326.3L701.2,325.9L699.1,325.1L698.9,323.8L697.4,324.0L696.1,328.7L697.1,330.7L698.3,334.2L700.7,335.6L699.1,336.5L697.6,335.3L696.6,334.0L694.6,332.8L695.1,329.6L696.6,327.1L696.1,325.1L694.5,321.3L695.0,318.9ZM701.1,309.0L705.7,307.8L708.3,309.0L710.6,310.6L708.5,312.6L707.0,314.8L708.1,317.2L710.9,319.7L712.7,323.8L712.6,326.8L709.8,328.9L708.5,330.4L705.7,331.7L705.3,329.1L707.3,327.9L707.0,326.9L709.8,325.8L709.8,321.8L709.8,319.7L705.7,315.2L704.8,312.5L702.4,311.8ZM731.2,315.6L734.0,315.7L734.1,318.9L732.8,321.3L733.6,323.0L736.9,323.8L736.9,325.3L735.3,323.8L733.1,323.3L731.5,323.3L731.2,321.8L730.3,320.5L730.8,318.9ZM733.6,334.5L736.1,331.9L739.0,329.9L740.9,332.0L740.7,335.3L739.4,336.5L739.0,334.5L736.9,335.3L736.9,333.7ZM574.1,294.0L577.4,294.5L580.7,295.2L584.0,294.2L586.1,294.5L589.4,294.5L590.4,297.5L589.4,300.0L588.1,299.5L586.6,296.8L588.1,300.8L590.6,305.7L591.7,306.7L593.7,309.8L574.1,309.8ZM553.2,355.9L554.4,353.6L556.8,354.1L559.3,351.8L559.6,349.6L562.1,346.8L562.6,342.7L563.6,340.2L563.6,338.9L565.1,337.8L570.0,339.1L573.3,337.6L578.2,337.4L581.5,338.6L584.0,340.1L583.6,342.2L584.5,342.5L581.8,344.7L581.7,348.3L581.0,350.4L581.3,353.4L581.5,356.7L583.5,359.6L580.5,360.0L579.7,361.3L580.0,363.3L579.7,365.4L582.0,366.1L582.0,368.0L579.9,366.9L577.4,365.4L574.6,364.6L573.1,364.6L572.5,363.9L569.7,364.4L569.2,362.1L568.8,358.0L565.1,357.5L564.2,359.2L561.8,359.3L560.1,355.7L554.4,355.7ZM592.5,325.1L593.0,322.2L595.5,321.8L598.8,322.2L602.7,325.4L601.7,327.9L603.7,327.1L603.4,328.1L604.5,330.5L607.0,331.7L610.3,332.8L611.9,332.8L607.0,337.8L602.1,339.1L601.9,339.6L600.4,339.4L598.0,340.4L595.5,340.1L592.2,338.6L591.0,337.1L588.9,334.5L587.3,332.8L589.2,330.4L590.6,327.9ZM520.5,251.8L521.3,250.3L521.7,251.7ZM523.2,254.3L523.4,255.2L521.6,255.9L521.5,254.5ZM524.3,253.4L522.3,253.4L523.7,252.2ZM523.3,254.7L522.3,254.6L521.4,253.7L522.1,253.5L523.5,253.1ZM732.3,317.7L733.3,316.8L735.4,317.6L733.7,319.1L731.9,318.3ZM730.7,317.5L732.8,316.7L734.2,317.6L732.5,318.4ZM735.6,316.7L735.9,319.2L733.3,317.8ZM735.1,320.1L733.0,320.1L732.8,319.4L734.1,318.5L735.0,318.6ZM737.8,323.7L734.6,322.9L737.2,322.0ZM734.5,326.0L737.0,325.2L736.3,327.3ZM739.0,326.6L736.4,326.9L736.6,325.3ZM736.7,328.5L738.1,329.2L737.1,330.0L736.1,330.8L735.1,328.9ZM738.8,328.0L739.4,329.9L737.1,328.7ZM739.3,327.6L738.2,328.8L737.1,328.4L737.9,326.9ZM735.6,329.1L736.7,328.3L738.7,328.5L737.7,329.7L736.4,330.5ZM741.1,328.2L739.8,329.0L738.6,328.0L738.9,326.8L741.3,327.4ZM738.9,331.1L737.2,331.7L737.2,330.0ZM742.1,331.7L742.1,333.1L741.2,333.4L739.9,332.8L740.7,331.4ZM738.2,333.2L738.5,332.5L740.2,333.0L740.3,333.9L738.7,334.6ZM726.2,330.5L725.9,328.8L727.0,328.5ZM726.9,326.6L728.3,326.2L728.9,327.2L726.8,327.4ZM732.4,327.3L730.3,327.9L731.0,326.2Z"/><path stroke-width="1" fill="#a84f15" d="M448.1,339.1L450.8,343.0L450.8,346.0L453.2,346.8L454.1,347.2L457.4,347.6L459.8,349.8L462.3,350.1L465.6,350.8L468.9,351.8L471.8,353.9L475.0,354.7L475.8,358.3L475.0,361.3L472.2,364.4L469.7,367.4L468.9,370.7L468.5,375.3L467.2,378.6L465.6,381.8L463.9,383.7L459.8,384.2L456.9,385.5L454.1,387.6L453.1,389.6L452.8,392.9L450.0,396.2L447.5,398.6L445.2,401.4L445.0,399.4L440.9,396.6L438.3,395.7L441.4,392.5L444.7,389.9L443.4,388.1L443.7,385.6L441.7,385.5L441.4,382.7L438.0,382.3L437.3,378.6L438.1,377.2L437.6,374.8L437.1,372.8L434.3,372.6L433.5,368.5L431.0,367.9L426.1,365.7L425.6,362.1L421.2,363.6L418.7,364.1L416.9,364.1L417.1,361.6L413.8,361.6L411.3,358.0L413.3,354.6L417.9,352.9L418.7,347.6L417.9,346.3L418.2,343.2L422.8,344.0L425.3,344.4L427.8,341.9L426.9,339.3L429.4,339.4L431.9,338.9L433.2,337.4L434.7,338.6L434.3,342.7L436.3,343.9L439.3,342.7L440.9,342.9L443.4,342.4L446.7,341.9ZM583.6,231.2L587.3,231.7L592.2,232.2L600.4,234.7L600.4,236.6L595.5,237.5L588.9,236.3L587.3,236.6L589.7,239.1L593.0,240.8L595.5,239.9L598.8,239.4L598.8,237.5L602.1,236.6L605.4,237.1L605.4,233.4L608.6,236.2L611.9,234.8L620.2,233.4L621.8,233.7L626.7,233.0L631.7,233.0L631.7,230.9L638.2,232.0L643.2,233.4L645.6,233.7L643.2,230.9L642.4,229.2L646.5,226.0L652.2,226.3L652.7,229.2L652.2,232.5L653.9,234.2L651.4,236.6L654.7,235.0L655.5,232.5L653.9,229.2L656.3,227.6L661.3,227.1L665.4,227.6L666.2,225.1L676.1,224.6L675.2,222.7L681.0,221.8L689.2,221.0L697.4,220.2L704.0,218.2L709.0,219.4L717.2,220.2L719.6,221.8L713.9,223.8L718.8,224.6L727.0,225.1L735.3,225.1L741.8,225.1L740.2,224.5L746.0,226.8L745.1,229.2L750.1,228.8L756.6,228.4L763.2,226.6L773.1,227.1L779.7,228.4L784.6,229.2L794.5,229.6L796.9,231.4L804.3,231.7L813.4,230.9L814.2,232.5L822.4,231.2L829.0,232.5L829.0,239.1L826.5,239.9L824.9,243.1L819.1,244.4L813.4,247.3L806.0,247.3L803.5,247.5L801.0,250.6L799.4,253.6L799.4,255.9L796.1,258.5L793.3,260.5L790.7,262.1L789.5,258.8L789.0,254.7L790.4,251.9L793.6,250.1L797.8,247.3L801.9,244.9L802.7,243.2L796.1,244.4L790.4,245.4L787.1,247.7L787.9,248.6L783.0,249.0L778.0,248.2L768.2,248.5L763.2,251.4L759.1,254.7L755.5,256.0L759.1,257.5L762.4,256.9L765.2,258.8L764.0,262.1L764.0,266.2L760.8,269.5L756.6,272.8L752.0,275.6L750.1,275.0L747.9,276.4L748.4,272.3L751.7,271.7L755.0,266.4L748.4,267.6L747.9,265.6L742.7,264.1L740.2,259.3L736.1,258.0L731.2,258.5L730.3,260.5L728.7,263.8L726.7,264.6L724.9,264.1L721.3,263.4L715.5,264.9L709.0,263.8L701.6,263.0L700.7,261.5L695.0,260.5L693.3,263.8L684.3,262.5L677.7,265.1L676.6,265.3L672.8,263.8L669.5,262.1L664.6,262.5L659.6,258.4L653.9,257.2L649.8,256.9L646.5,255.1L639.9,256.4L633.3,257.2L634.1,262.1L630.8,262.8L623.4,262.1L616.9,261.0L612.8,263.4L610.3,265.4L609.8,266.2L613.6,269.5L611.9,270.4L611.1,275.3L612.8,277.3L609.5,277.3L607.0,275.8L604.5,275.8L598.8,274.5L593.8,272.3L594.7,271.2L593.4,271.5L595.5,269.5L597.6,268.4L595.8,268.5L598.3,267.4L598.8,264.4L595.5,263.8L591.4,263.0L588.9,260.0L585.3,260.2L586.8,258.0L583.6,254.4L579.0,253.7L578.2,251.4L579.0,248.2L582.3,247.5L579.0,246.5L582.3,244.0L584.8,242.6L582.3,240.8L582.3,238.0L581.5,235.8L579.9,233.8L579.9,232.5L580.7,231.7ZM237.0,232.5L241.9,233.7L248.5,235.8L253.4,237.1L251.8,238.3L249.3,239.9L245.2,238.3L243.6,239.6L240.3,238.3L237.0,239.1ZM758.3,222.7L769.8,221.8L779.7,222.7L766.5,224.3L759.9,223.8ZM762.4,225.1L768.2,225.0L766.5,225.8ZM826.5,229.2L829.0,228.4L829.0,229.6ZM237.0,228.4L241.1,228.8L237.0,229.6ZM565.2,256.5L570.5,256.7L570.5,255.4L567.5,255.1ZM788.7,263.0L789.5,263.4L788.2,264.1ZM783.0,268.4L784.6,267.4L782.1,269.4ZM775.6,272.0L777.7,271.0L774.7,272.7ZM634.3,304.6L642.4,304.2L643.7,305.7L645.2,307.2L649.8,305.7L648.1,302.4L649.8,300.3L653.0,297.0L655.5,295.0L655.5,292.1L654.7,289.3L659.6,288.4L658.0,286.0L656.3,285.2L656.0,284.7L650.6,286.0L650.1,289.3L648.1,290.9L647.0,293.7L642.4,295.0L642.0,297.0L635.8,297.7L633.1,297.0L636.6,301.3L636.1,302.3ZM748.3,289.8L750.9,287.6L755.8,287.5L758.0,285.2L758.8,284.3L760.8,284.7L762.9,281.0L763.2,279.2L763.7,277.9L765.5,278.1L766.5,281.0L764.9,283.2L764.7,286.0L764.4,288.0L762.9,288.4L761.1,288.8L758.3,289.1L758.0,289.6L756.3,290.9L755.2,289.6L751.7,289.6L750.4,290.4ZM746.4,291.1L748.4,290.3L749.9,291.4L748.9,294.4L747.1,294.7L746.8,292.1ZM750.4,290.9L754.2,289.8L753.8,290.9L751.7,292.1ZM763.2,277.6L763.7,275.0L765.9,271.3L769.0,273.3L771.9,273.3L772.3,274.8L768.6,276.9L765.7,276.1ZM537.4,335.5L540.4,335.6L542.0,338.6L543.7,338.9L547.0,338.4L547.8,336.1L550.3,334.7L551.9,335.1L553.6,332.0L555.7,327.9L556.8,325.0L555.4,323.5L552.7,324.3L547.8,325.0L544.5,324.6L539.6,323.8L538.9,326.8L538.9,328.7L537.6,331.2ZM448.8,345.9L447.5,345.8L447.8,344.1ZM450.3,347.0L450.5,346.2L452.2,345.7L452.9,346.7L451.8,347.7ZM452.3,346.1L453.1,346.1L453.4,347.3L452.1,347.5L451.3,347.2ZM452.1,346.1L453.6,347.5L451.2,347.8ZM453.6,345.8L455.4,345.9L454.0,346.8ZM608.9,214.1L608.6,211.9L610.4,213.0ZM618.6,211.5L617.7,211.9L617.4,210.1L618.5,210.2ZM627.9,211.9L626.9,211.8L626.5,211.5L626.2,210.5L628.2,211.0ZM632.9,210.3L630.7,210.7L630.1,209.7L631.7,209.5ZM637.4,210.9L636.2,211.7L635.2,209.9ZM686.4,213.3L688.4,212.9L689.1,213.8L687.8,214.4ZM687.8,216.4L689.9,215.8L689.7,217.1ZM692.4,214.8L693.2,214.6L695.1,215.6L693.6,216.4L692.5,216.3ZM697.1,213.6L698.5,214.3L697.3,215.3L696.1,213.9ZM702.3,218.6L702.9,217.5L704.7,218.2ZM760.0,220.9L761.1,220.9L762.2,221.8L760.7,222.1ZM764.6,221.9L764.8,223.1L762.8,222.9L763.0,221.7ZM767.9,220.1L768.8,220.7L767.2,221.4L766.6,221.5L766.8,220.3ZM771.9,222.4L771.6,223.8L769.8,223.2L770.4,222.4ZM777.3,223.2L777.2,224.1L775.7,223.6L775.2,222.8L777.2,222.4ZM780.9,223.7L780.0,223.2L780.8,221.9L782.6,222.6L782.9,223.0ZM771.1,276.2L773.7,275.8L772.7,277.6ZM774.2,273.5L774.0,272.4L775.5,272.3L775.9,273.2ZM777.1,271.6L776.5,271.1L776.2,270.2L777.8,270.5L777.8,271.3ZM778.2,271.1L780.1,271.5L778.6,272.5ZM784.0,267.6L781.8,268.5L782.2,267.0ZM786.0,265.8L786.7,264.7L788.1,265.1L787.6,266.1ZM790.1,264.1L790.2,262.8L791.4,263.1L792.1,264.3ZM742.9,291.6L745.0,290.7L744.4,292.2ZM746.8,292.9L745.6,292.3L746.8,291.0L748.3,292.2ZM749.2,291.1L748.9,291.9L747.2,291.8L747.6,290.7ZM750.6,289.5L750.8,290.4L748.6,290.4L749.5,288.9ZM737.6,299.8L736.9,300.0L736.2,298.6L738.1,298.9ZM737.2,300.4L738.1,300.3L738.1,301.2L736.7,301.5L736.1,300.4ZM740.9,300.6L739.6,301.7L738.1,300.6L740.3,299.6ZM740.8,304.8L739.6,303.5L741.5,303.2ZM749.0,283.6L750.3,284.3L749.9,285.2L749.2,285.7L748.0,284.5ZM750.3,281.0L751.2,281.6L750.8,282.3L748.6,282.3L748.5,281.5ZM755.8,282.7L754.9,283.1L753.5,282.1L754.1,281.1L755.8,281.2ZM754.5,282.4L755.8,281.7L757.4,282.9L755.6,283.3ZM760.4,278.8L761.7,280.0L760.3,280.4ZM760.9,280.9L762.0,282.1L760.3,281.9ZM763.0,279.2L762.8,278.0L764.4,278.5ZM766.5,279.1L767.5,280.8L766.1,281.1Z"/><path stroke-width="1" fill="#8a2d0a" d="M301.1,231.5L294.6,230.9L286.3,230.1L281.4,229.4L275.6,228.8L269.9,230.1L265.0,231.7L260.0,232.9L263.3,234.8L266.6,236.0L267.4,237.0L263.3,236.6L256.7,238.1L260.0,239.9L265.8,239.9L268.2,241.4L262.5,242.4L260.4,244.7L261.7,246.5L266.6,247.7L266.6,249.6L272.4,249.5L274.0,251.3L269.9,253.9L265.0,255.6L262.0,256.4L269.1,254.9L275.6,252.3L279.8,249.8L282.2,248.2L283.9,245.7L287.2,245.4L288.8,247.3L292.9,246.0L296.2,247.3L300.3,247.3L303.6,248.0L307.7,249.8L311.0,252.3L313.5,254.7L316.8,255.6L319.2,254.1L315.9,251.4L311.0,248.2L306.9,249.0L304.4,247.3L301.1,246.8ZM261.7,256.9L259.2,257.9L256.7,258.5L258.4,257.7ZM255.1,259.2L250.2,260.2L246.9,260.5L250.2,259.7ZM243.6,260.8L240.3,261.1L241.9,260.5ZM280.6,250.8L282.7,251.0L281.4,252.3L278.9,251.8ZM251.0,241.4L255.1,242.1L253.4,241.2ZM258.4,247.2L260.5,247.7L259.7,246.8ZM276.5,312.8L278.1,313.6L277.0,314.9L276.5,313.8ZM272.8,310.5L273.7,311.0L273.2,311.1ZM331.1,265.4L376.8,265.4L385.8,267.1L387.5,266.6L394.0,269.5L397.3,271.2L397.3,276.9L403.1,275.6L403.1,274.5L407.2,273.6L410.2,272.0L416.2,271.5L419.2,268.1L421.5,268.7L422.8,271.7L422.8,272.5L417.9,274.1L416.6,276.1L417.9,277.4L414.6,278.2L411.3,279.2L411.3,281.0L408.8,282.7L408.0,285.2L408.4,287.6L405.6,289.8L402.3,291.7L399.8,294.2L399.0,295.8L400.6,300.0L401.4,302.4L401.0,304.6L399.5,304.6L398.2,302.4L396.8,300.0L397.0,298.0L394.9,296.7L392.4,297.2L389.1,296.2L386.6,296.3L386.2,298.1L383.4,298.0L378.8,297.2L376.8,298.3L373.5,300.3L373.2,303.2L370.2,302.4L369.4,300.8L366.9,297.3L364.1,297.2L363.3,298.3L361.2,297.3L357.9,293.7L355.1,293.7L355.1,294.5L350.5,294.5L344.2,292.6L340.4,292.6L338.3,290.1L334.7,289.3L332.4,285.8L331.6,283.8L329.4,281.0L328.6,279.6L328.8,276.9L329.1,272.8L329.1,269.9L327.9,266.4L330.7,266.7L331.6,267.9ZM689.7,336.8L693.3,337.4L697.4,341.1L703.2,346.0L704.8,349.3L707.3,350.9L707.0,355.7L704.8,355.4L701.2,352.6L698.3,348.5L695.3,343.2L691.7,339.9ZM712.2,344.4L713.2,342.7L713.4,343.4L714.7,344.5L717.5,343.7L720.0,343.9L721.8,342.4L722.9,341.1L723.3,338.9L726.2,339.1L726.4,340.2L726.7,342.7L728.7,344.4L726.7,344.7L726.2,347.3L724.6,349.0L724.1,351.8L723.8,352.6L721.5,352.7L718.8,351.3L716.7,351.8L714.2,350.8L713.9,348.1L712.4,346.8ZM728.7,361.6L731.6,362.3L730.3,362.9ZM736.1,362.9L737.7,361.1L738.6,360.8L738.6,362.4ZM740.2,351.3L742.2,351.4L741.2,352.2ZM748.4,347.3L753.4,347.3L754.2,350.4L755.8,351.4L759.1,348.6L764.9,350.3L764.9,361.0L761.6,359.3L759.9,359.8L761.1,357.8L759.9,355.0L755.0,353.2L751.7,352.6L750.1,350.6L753.0,349.8L750.6,349.6L748.4,348.3ZM302.8,245.4L303.6,245.5L302.8,247.0L301.6,246.6L301.7,245.4ZM305.0,250.5L307.7,250.1L306.9,251.3ZM306.0,248.1L306.3,249.4L304.9,249.8L304.1,248.7L304.8,247.8ZM305.2,253.1L305.7,251.9L306.7,251.7L307.6,252.6L306.9,253.0ZM309.6,252.8L307.7,252.4L307.5,251.6L309.1,251.2ZM311.3,253.3L310.6,254.4L309.5,254.9L308.8,254.1L309.4,253.4ZM312.8,254.3L312.9,253.2L314.7,254.0ZM269.9,251.6L270.9,252.4L267.9,252.0ZM273.2,250.8L274.3,251.7L272.8,252.6L271.7,251.8ZM276.7,252.4L275.4,252.0L275.0,251.0L277.4,251.1ZM276.8,249.5L275.5,249.9L275.3,249.8L275.3,248.6L276.5,248.3ZM281.9,248.4L282.7,249.6L281.2,249.5ZM283.5,246.1L282.5,246.7L281.1,246.2L282.8,245.4ZM284.4,249.6L282.4,249.7L282.4,248.9L283.8,248.4L285.2,248.9ZM289.3,247.8L289.4,246.9L291.5,246.8L291.3,248.1ZM726.5,358.5L725.3,359.3L724.2,358.9L723.6,358.2L724.8,357.6ZM726.4,360.4L727.2,359.9L727.8,360.6L728.0,361.8L726.2,361.8ZM730.9,360.0L731.3,361.6L729.6,361.4L730.0,360.7ZM732.6,361.5L731.7,361.3L732.0,359.7L733.1,360.4ZM733.9,360.5L734.0,358.9L735.2,360.6ZM738.7,361.6L739.0,360.1L740.6,361.8ZM743.2,361.3L741.7,362.7L740.7,361.0ZM741.4,361.6L743.0,360.6L744.2,360.8L744.1,361.9L742.9,362.8ZM735.2,347.6L736.1,347.3L736.5,347.7L736.5,348.7L735.4,349.2ZM738.5,348.1L738.8,347.2L740.4,346.9L740.4,348.7L739.1,348.6ZM740.8,349.8L740.1,349.1L740.8,348.0L742.4,348.6L741.6,349.6ZM741.2,351.7L740.7,350.1L742.0,350.3L743.3,350.9L742.1,352.1ZM744.5,349.7L746.0,349.2L746.3,350.9L745.1,351.3L744.2,350.6ZM743.4,352.9L744.8,352.9L744.2,354.1L743.3,354.3L742.3,353.2ZM688.8,349.7L691.2,349.2L691.3,350.8ZM691.8,350.1L693.0,349.9L693.5,351.0L693.0,352.0L692.0,351.6ZM695.1,354.8L695.4,354.5L696.6,355.1L696.8,355.9L694.5,356.0ZM698.2,353.9L697.6,353.6L698.1,352.1L698.9,352.7L699.5,353.4ZM701.8,356.4L701.9,357.2L701.3,357.5L699.6,356.9L700.9,355.9ZM744.3,350.2L743.1,351.5L742.0,349.9ZM744.0,350.9L742.8,349.6L744.0,349.5L745.0,350.8ZM750.4,349.6L750.6,351.4L749.0,350.4ZM752.0,351.1L752.5,352.0L750.2,352.1ZM752.1,356.6L752.2,357.6L751.1,357.6L750.4,356.4L751.2,355.9ZM754.9,358.3L757.5,358.1L756.0,359.9ZM757.2,358.2L755.2,359.2L754.3,357.8L755.7,357.0ZM756.2,356.9L757.0,358.4L754.9,358.3ZM806.8,255.7L808.4,255.7L808.4,256.7L806.8,256.7ZM809.0,256.2L810.6,256.2L810.6,257.2L809.0,257.2ZM817.1,259.8L818.7,259.8L818.7,260.8L817.1,260.8ZM825.8,260.9L827.4,260.9L827.4,261.9L825.8,261.9ZM827.5,261.2L829.1,261.2L829.1,262.2L827.5,262.2Z"/><path stroke-width="1" fill="#6b0000" d="M654.2,281.0L658.8,279.4L661.3,278.6L664.9,276.6L664.9,276.1L664.6,272.0L668.3,271.2L669.5,268.4L673.6,268.7L676.6,265.3L677.4,265.1L681.8,267.9L682.6,271.7L689.2,273.3L691.7,275.6L699.1,275.9L705.7,277.6L713.1,276.1L716.8,274.1L720.5,272.0L725.4,269.7L730.0,269.2L727.9,267.2L722.9,266.7L724.9,264.1L726.7,264.6L728.7,263.8L730.3,260.5L731.2,258.5L736.1,258.0L740.2,259.3L742.7,264.1L747.9,265.6L748.4,267.6L755.0,266.4L751.7,271.7L748.4,272.3L747.9,276.4L746.4,275.5L743.5,276.9L741.5,277.4L737.4,280.2L732.3,282.2L733.3,278.9L729.5,281.0L726.6,281.9L728.4,283.8L731.6,283.8L734.4,285.2L731.2,286.5L729.0,288.4L731.6,291.7L733.3,294.2L733.6,296.7L732.0,299.1L730.0,303.2L727.0,305.7L724.6,308.2L720.5,309.3L716.4,310.6L713.9,312.6L713.9,310.8L711.1,310.5L708.3,309.0L705.7,307.8L701.1,309.0L699.4,311.0L697.4,310.3L695.8,309.0L695.5,306.5L693.5,305.7L695.0,300.6L693.2,299.5L690.9,297.8L688.4,298.3L684.3,300.3L681.0,299.6L679.0,301.1L677.9,300.1L674.4,300.0L669.5,297.5L666.2,296.3L662.9,294.7L662.4,292.6L663.7,290.9L661.3,287.6L659.6,288.4L658.0,286.0L656.3,285.2L656.0,284.7ZM711.8,314.3L714.7,312.9L715.5,313.8L713.1,316.1ZM645.2,307.2L646.1,309.3L648.1,311.6L652.4,311.5L652.7,314.8L653.5,318.9L655.5,323.0L656.3,326.3L658.3,330.4L660.4,332.7L661.6,331.4L663.4,329.1L664.9,324.6L664.9,321.0L668.3,318.7L672.8,313.9L675.7,311.8L676.1,310.6L678.0,310.2L678.9,310.3L678.0,305.7L678.0,303.6L680.5,302.9L680.7,304.4L684.9,304.7L683.0,307.0L684.8,307.7L685.3,311.0L685.9,309.8L686.4,306.5L688.7,304.1L689.6,302.1L692.8,300.4L693.2,299.5L690.9,297.8L688.4,298.3L684.3,300.3L684.3,301.8L679.4,301.9L679.0,301.1L677.9,300.1L677.9,302.6L672.8,302.1L669.5,300.9L664.7,298.6L666.2,296.3L662.9,294.7L662.4,292.6L663.7,290.9L661.3,287.6L659.6,288.4L654.7,289.3L655.5,292.1L655.5,295.0L653.0,297.0L649.8,300.3L648.1,302.4L649.8,305.7Z"/><path stroke-width="1" fill="#ffff80" d="M577.4,394.7L579.9,393.2L581.3,394.7L579.0,396.3Z"/><path stroke-width="1" fill="#ffff80" d="M584.0,388.8L585.6,388.8L585.6,390.7L584.0,390.4Z"/><path fill="none" stroke-width="2.4" stroke-dasharray="3 0.6 1.5 0.4" d="M413.0,217.4L416.2,219.4L421.2,221.0L429.4,220.7L436.8,221.8L440.1,224.3L442.6,227.6L443.4,230.1L449.1,231.7L444.2,235.0L445.8,237.5L448.3,240.8L450.8,243.2L453.2,245.2L457.4,246.2L459.8,247.5L462.3,247.0L465.6,241.6L467.2,239.1L470.5,238.0L477.1,236.6L482.0,234.0L490.2,233.4L495.2,231.2L490.2,230.4L496.8,230.1L496.8,226.8L501.8,224.3L500.1,222.7L503.4,219.4L501.8,216.9L505.0,214.4L513.3,212.0L503.4,212.0L496.8,210.3"/><path fill="none" stroke-width="2.2" stroke-dasharray="3 0.6 1.5 0.4" d="M541.2,249.8L541.2,246.5L542.0,244.0L546.2,241.9L550.3,240.8L553.6,238.3L556.0,235.0L559.3,233.0L564.2,231.2L569.2,230.1L574.9,229.1L579.0,229.2"/><path fill="none" stroke-width="2.4" stroke-dasharray="3 0.6 1.5 0.4" d="M262.0,256.4L269.1,254.9L275.6,252.3L279.8,249.8L282.2,248.2L283.9,245.7L287.2,245.4L288.8,247.3L292.9,246.0L296.2,247.3L300.3,247.3L303.6,248.0L307.7,249.8L311.0,252.3L313.5,254.7L316.8,255.6L318.4,256.0L320.0,258.0L322.5,259.7L323.3,262.1L328.3,263.8L331.1,265.4"/><path fill="none" stroke-width="3.2" stroke-dasharray="3 0.6 1.5 0.4" d="M411.8,414.2L413.0,415.1L411.3,418.4L408.8,422.5L408.8,425.8L409.7,429.9L411.3,433.2L414.6,435.6L419.5,437.3L422.8,436.9"/><path fill="none" stroke-width="2" stroke-dasharray="3 0.6 1.5 0.4" d="M426.9,246.8L430.2,250.6L432.7,253.9L437.6,256.4L440.9,258.8L441.4,260.5"/><path fill="none" stroke-width="2" stroke-dasharray="3 0.6 1.5 0.4" d="M378.4,228.1L381.7,230.1L383.4,231.7L388.3,233.4L392.4,231.5L398.2,231.5L399.0,233.4L398.2,235.8L391.6,236.6L389.9,239.1L385.0,240.8"/><path fill="none" stroke-width="2" stroke-dasharray="3 0.6 1.5 0.4" d="M322.5,230.1L327.4,231.7L335.7,231.7L342.2,232.5L345.5,234.2L352.1,234.2L355.4,233.2L360.3,233.4L365.3,234.2L371.8,233.2L375.1,234.2"/><path fill="none" stroke-width="2" stroke-dasharray="3 0.6 1.5 0.4" d="M523.1,251.4L524.0,253.9L525.1,255.6"/><path fill="none" stroke-width="2" stroke-dasharray="3 0.6 1.5 0.4" d="M675.2,222.7L681.0,221.8L689.2,221.0L697.4,220.2L704.0,218.2L709.0,219.4L717.2,220.2L719.6,221.8"/><path fill="none" stroke-width="1.8" stroke-dasharray="3 0.6 1.5 0.4" d="M605.4,233.4L608.6,236.2L611.9,234.8L620.2,233.4L626.7,233.0L631.7,233.0L631.7,230.9L638.2,232.0L643.2,233.4"/><path fill="none" stroke-width="2" stroke-dasharray="3 0.6 1.5 0.4" d="M642.4,229.2L646.5,226.0L652.2,226.3L652.7,229.2L652.2,232.5L653.9,234.2L655.5,232.5L653.9,229.2L656.3,227.6L661.3,227.1L665.4,227.6L666.2,225.1"/><path fill="none" stroke-width="1.8" stroke-dasharray="3 0.6 1.5 0.4" d="M796.1,258.5L793.3,260.5L790.7,262.1L789.5,258.8L789.0,254.7L790.4,251.9"/><path fill="none" stroke-width="1.8" stroke-dasharray="3 0.6 1.5 0.4" d="M571.3,281.9L572.5,283.5L571.2,283.7L570.8,286.0L569.7,286.0L568.4,285.2L567.9,283.0"/><path fill="none" stroke-width="1.8" stroke-dasharray="3 0.6 1.5 0.4" d="M422.8,271.7L424.5,272.8L424.5,274.5L427.8,272.8L431.9,271.7L434.3,270.4L433.5,268.9L432.7,271.0L429.4,270.4L426.4,269.5L426.1,267.4L427.3,265.8"/><path fill="none" stroke-width="1.6" stroke-dasharray="3 0.6 1.5 0.4" d="M404.7,330.7L402.3,330.2L399.8,331.5L397.3,330.4"/><path fill="none" stroke-width="1.8" stroke-dasharray="3 0.6 1.5 0.4" d="M693.3,318.9L693.7,321.3L695.0,326.3L695.1,329.6L694.6,332.8"/><path fill="none" stroke-width="2.6" stroke-dasharray="3 0.6 1.5 0.4" d="M450.8,343.0L450.8,346.0L453.2,346.8"/></g></svg>
</div>
<!-- map bottom bar -->
<div class="a" style="left:207px;top:592px;width:669px;height:18px;background:#f0f0f0;border-top:1px solid #e3e3e3"></div>
<div class="a" style="left:207px;top:594px;width:17px;height:15px;background:#cce4f7;border:1px solid #b9d9f3"></div>
<div class="a" style="left:243px;top:594px;width:1px;height:14px;background:#8c8c8c"></div>
<svg class="a" style="left:212px;top:596px" width="8" height="8" viewBox="0 0 16 16"><rect x="1" y="1" width="14" height="14" fill="#7fbf5a" stroke="#222" stroke-width="1.8"/><path d="M2 12c4-1 5-5 6.5-6.5s3-2.5 5.5-3v11.5h-12z" fill="#cfe9b2"/><path d="M8 14c1-4 3-6 6-7" stroke="#3b6fc4" stroke-width="1.2" fill="none"/></svg><svg class="a" style="left:228px;top:596px" width="8" height="8" viewBox="0 0 16 16"><path d="M2 1h8.5l3.5 3.5v10.5h-12z" fill="#fff" stroke="#222" stroke-width="1.6"/><rect x="5" y="6" width="6" height="3" fill="#3b7bd1"/><path d="M5 11.5h6" stroke="#555" stroke-width="1.2"/></svg><svg class="a" style="left:252px;top:595px" width="10" height="10" viewBox="0 0 16 16"><path d="M13.5 7a5.6 5.6 0 0 0-10-2.4M2.5 9a5.6 5.6 0 0 0 10 2.4" fill="none" stroke="#1d4fa8" stroke-width="2"/><path d="M1 2.2l.8 5l4.6-1.8z" fill="#1d4fa8"/><path d="M15 13.8l-.8-5l-4.6 1.8z" fill="#1d4fa8"/></svg><svg class="a" style="left:270px;top:596px" width="8" height="8" viewBox="0 0 16 16"><rect x="3.5" y="2" width="3.2" height="12" fill="#1d4fa8"/><rect x="9.5" y="2" width="3.2" height="12" fill="#1d4fa8"/></svg>
<div class="a" style="left:299px;top:594px;width:541px;height:14px;background:#cdcdcd"></div>
<svg class="a" style="left:287px;top:595px" width="8" height="11" viewBox="0 0 8 11"><path d="M6 2 L2.5 5.5 L6 9" fill="none" stroke="#404040" stroke-width="2"/></svg>
<svg class="a" style="left:846px;top:595px" width="8" height="11" viewBox="0 0 8 11"><path d="M2 2 L5.5 5.5 L2 9" fill="none" stroke="#404040" stroke-width="2"/></svg>
<!-- vscroll -->
<div class="a" style="left:859px;top:109px;width:17px;height:484px;background:#f0f0f0"></div>
<div class="a" style="left:860px;top:128px;width:14px;height:446px;background:#cdcdcd"></div>
<svg class="a" style="left:862px;top:115px" width="11" height="8" viewBox="0 0 11 8"><path d="M2 6 L5.5 2.5 L9 6" fill="none" stroke="#404040" stroke-width="2"/></svg>
<svg class="a" style="left:862px;top:580px" width="11" height="8" viewBox="0 0 11 8"><path d="M2 2 L5.5 5.5 L9 2" fill="none" stroke="#404040" stroke-width="2"/></svg>
<!-- right dock -->
<div class="a" style="left:876px;top:108px;width:23px;height:502px;background:#f5f5f5"></div>
<div class="a" style="left:878px;top:110px;width:21px;height:71px;background:#f3f3f3;border:1px solid #9a9a9a;border-right:none;border-radius:5px 0 0 5px"></div><div class="a" style="left:878px;top:183px;width:21px;height:65px;background:#f3f3f3;border:1px solid #9a9a9a;border-right:none;border-radius:5px 0 0 5px"></div><svg class="a" style="left:880px;top:114px" width="16" height="16" viewBox="0 0 16 16"><rect x="0.5" y="0.5" width="15" height="12" fill="#fff" stroke="#444"/><rect x="0.5" y="0.5" width="15" height="3" fill="#2c5cab" stroke="#444"/><path d="M6 6l6-1.5v9l-6 1.5z" fill="#e9d21c" stroke="#7a6a00" stroke-width=".8"/><path d="M12 4.5l2 1v9l-2-1z" fill="#a89500" stroke="#7a6a00" stroke-width=".6"/><ellipse cx="5.5" cy="13" rx="3.2" ry="2" fill="#3f78c9" stroke="#1d3f78" stroke-width=".7"/><ellipse cx="5.5" cy="12" rx="3.2" ry="2" fill="#7ab0ee" stroke="#1d3f78" stroke-width=".7"/></svg><svg class="a" style="left:880px;top:186px" width="16" height="16" viewBox="0 0 16 16"><rect x="0.5" y="0.5" width="15" height="12" fill="#fff" stroke="#444"/><rect x="0.5" y="0.5" width="15" height="3" fill="#2c5cab" stroke="#444"/><rect x="3" y="5.5" width="10" height="2.5" fill="#dfe8f5" stroke="#6d8fc2" stroke-width=".7"/><circle cx="9" cy="12" r="3.6" fill="#2f72c8" stroke="#173e7c" stroke-width=".7"/><path d="M7 10.5c1.5-1 3 0 3.5 1.5c-.5 1.5-2 1.8-3 1z" fill="#4cae3c"/></svg><span class="t" style="left:895.5px;top:135px;font-size:12px;transform:rotate(90deg);transform-origin:0 0;color:#444" >Catalog</span><span class="t" style="left:895.5px;top:206px;font-size:12px;transform:rotate(90deg);transform-origin:0 0;color:#444" >Search</span>
<!-- status bar -->
<div class="a" style="left:1px;top:610px;width:898px;height:21px;background:#f0f0f0"></div>
<div class="a" style="left:462px;top:612px;width:1px;height:17px;background:#f9f9f9"></div>
<div class="a" style="left:878px;top:612px;width:1px;height:17px;background:#f9f9f9"></div>
<span class="t" style="left:627px;top:615px;font-size:11.8px;letter-spacing:-0.331px">109.797&nbsp;&nbsp;141.586 Decimal Degrees</span>
<svg class="a" style="left:887px;top:620px" width="11" height="11" viewBox="0 0 11 11" fill="#bfbfbf"><rect x="8" y="0" width="2" height="2"/><rect x="5" y="3" width="2" height="2"/><rect x="8" y="3" width="2" height="2"/><rect x="2" y="6" width="2" height="2"/><rect x="5" y="6" width="2" height="2"/><rect x="8" y="6" width="2" height="2"/></svg>
<svg class="a" style="left:8px;top:7px" width="17" height="17" viewBox="0 0 16 16"><defs><radialGradient id="gglobe" cx="0.4" cy="0.35" r="0.7"><stop offset="0" stop-color="#3f86d6"/><stop offset="1" stop-color="#163a78"/></radialGradient></defs><circle cx="8" cy="7.8" r="7" fill="url(#gglobe)" stroke="#0e2a55" stroke-width="1"/><path d="M11 3.2c1.6.6 2.8 2 3.2 3.6c-.6 1.2-1.8 1.2-2.6.2c-.7-1.2-.9-2.6-.6-3.8zM11.5 9.5c1 .2 1.8 0 2.4-.6c-.2 1.6-1 2.9-2.2 3.8c-.7-.9-.8-2.2-.2-3.2z" fill="#4db04a"/><path d="M2.2 9.5c.8.6 1.6 1.7 1.8 3c-1-.7-1.6-1.8-1.8-3z" fill="#4db04a"/><path d="M9.4 9.6l5 5" stroke="#d9822b" stroke-width="2.4" stroke-linecap="round"/><circle cx="6.9" cy="6.7" r="3.6" fill="#bfe6fa" stroke="#eef3f8" stroke-width="1.3"/><circle cx="6.9" cy="6.7" r="4.3" fill="none" stroke="#2a4a78" stroke-width=".5"/><path d="M4.8 5.6a2.6 2.6 0 0 1 3-1.2" stroke="#fff" stroke-width=".9" fill="none"/></svg><svg class="a" style="left:780px;top:15px" width="11" height="2"><rect width="11" height="1" y="0" fill="#000"/></svg><svg class="a" style="left:825px;top:10px" width="11" height="11"><rect x="0.5" y="0.5" width="10" height="10" fill="none" stroke="#000"/></svg><svg class="a" style="left:871px;top:10px" width="11" height="11"><path d="M0.3 0.3L10.7 10.7M10.7 0.3L0.3 10.7" stroke="#000" stroke-width="1.1" fill="none"/></svg>
</div>
<div id="frame"></div>
</body></html>
